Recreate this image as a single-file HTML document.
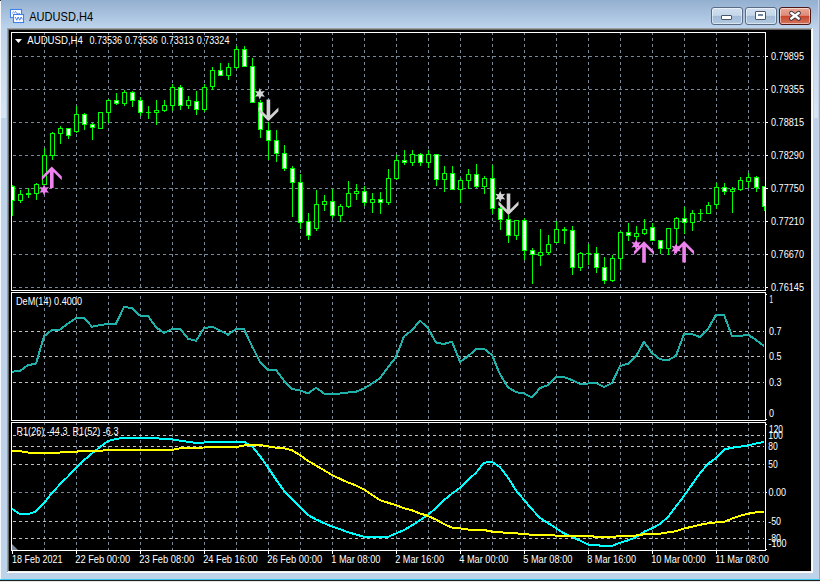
<!DOCTYPE html>
<html><head><meta charset="utf-8"><style>
html,body{margin:0;padding:0;}
body{width:820px;height:582px;overflow:hidden;position:relative;background:#bcd3ea;font-family:"Liberation Sans",sans-serif;}
.abs{position:absolute;}
#title{left:0;top:0;width:820px;height:28px;background:linear-gradient(#94b0d0,#a6bfdc 45%,#bcd4ec);}
.btn{top:7px;height:16px;width:30px;border:1px solid #5b6b82;border-radius:3px;box-sizing:content-box;
 background:linear-gradient(#d2e0f0 0%,#c4d6ea 46%,#a3bbd7 52%,#b2c9e2 100%);box-shadow:inset 0 0 0 1px rgba(255,255,255,.5);}
#bmin{left:711px;} #bmax{left:745px;}
#bcls{left:779px;border-color:#4b1717;background:linear-gradient(#eaa899 0%,#df8b78 46%,#c8462c 52%,#d3755e 100%);}
</style></head><body>
<div class="abs" id="title"></div>
<div class="abs" style="left:0;top:0;width:1px;height:582px;background:#f4f7fb"></div>
<div class="abs" style="left:0;top:0;width:1px;height:1px;background:#303030"></div>
<div class="abs" style="left:818px;top:0;width:1px;height:579px;background:#c6d0e8"></div>
<div class="abs" style="left:814px;top:28px;width:4px;height:90px;background:linear-gradient(#bcd3ea,#d8e5f3)"></div>
<div class="abs" style="left:1px;top:28px;width:5px;height:90px;background:linear-gradient(#bcd3ea,#d8e5f3)"></div>
<div class="abs" style="left:819px;top:0;width:1px;height:582px;background:#38c8f0"></div>
<div class="abs" style="left:0;top:579px;width:820px;height:1px;background:#38c8f0"></div>
<div class="abs" style="left:0;top:580px;width:820px;height:1px;background:#202020"></div>
<div class="abs" style="left:0;top:581px;width:820px;height:1px;background:#e8e8e8"></div>
<div class="abs btn" id="bmin"><div class="abs" style="left:9px;top:7px;width:9px;height:3px;border:1px solid #4a5568;background:#fff;border-radius:1px"></div></div>
<div class="abs btn" id="bmax"><div class="abs" style="left:9px;top:3px;width:9px;height:7px;border:1px solid #4a5568;background:#fff;border-radius:1px"><div class="abs" style="left:2px;top:2px;width:5px;height:2px;background:#6f86a8"></div></div></div>
<div class="abs btn" id="bcls"><svg class="abs" style="left:0;top:0" width="30" height="16" viewBox="0 0 30 16"><path d="M11.3 5 L18.7 10.6 M18.7 5 L11.3 10.6" stroke="#3a3344" stroke-width="4.3" stroke-linecap="round"/><path d="M11.3 5 L18.7 10.6 M18.7 5 L11.3 10.6" stroke="#ffffff" stroke-width="2.5" stroke-linecap="round"/></svg></div>
<svg class="abs" style="left:0;top:0" width="120" height="28" viewBox="0 0 120 28">
<rect x="10.5" y="9.5" width="11" height="8" fill="#fff" stroke="#3f80f6" stroke-width="1.1"/>
<rect x="10.5" y="9.5" width="11" height="8" fill="none" stroke="#3aa070" stroke-width="0.6" stroke-dasharray="0.5 2.5"/>
<path d="M12.3 13.2 q1.2 -2.2 2.4 -0.3 M15 11.5 q1.4 0.6 2 2.2 q1.2 0.6 3 0" stroke="#3b7be8" fill="none" stroke-width="1"/>
<rect x="13.5" y="14.5" width="10" height="8" fill="#fff" stroke="#3f80f6" stroke-width="1.1"/>
<rect x="13.5" y="14.5" width="10" height="8" fill="none" stroke="#3aa070" stroke-width="0.6" stroke-dasharray="0.5 2.5"/>
<path d="M15.2 17 l1.6 3.2 l1.4 -3.2 l1.5 3.2 l1.4 -3.2 l1.2 2.4" stroke="#3b7be8" fill="none" stroke-width="0.9"/>
<text x="29.2" y="21" font-family="Liberation Sans" font-size="12.2" fill="#000" textLength="64" lengthAdjust="spacingAndGlyphs">AUDUSD,H4</text>
</svg>
<svg class="abs" style="left:0;top:0" width="820" height="582" viewBox="0 0 820 582" shape-rendering="auto">
<rect x="7" y="28" width="806" height="545" fill="#000"/>
<path d="M7 28h806v1h-806z M7 28h1v545h-1z" fill="#a0a0a0" shape-rendering="crispEdges"/>
<path d="M8 29h804v1h-804z M8 29h1v543h-1z" fill="#696969" shape-rendering="crispEdges"/>
<path d="M812 28h1v545h-1z M7 572h806v1h-806z" fill="#ffffff" shape-rendering="crispEdges"/>
<path d="M811 29h1v543h-1z M8 571h804v1h-804z" fill="#f0f0f0" shape-rendering="crispEdges"/>
<path d="M44 33h1v2h-1zM44 38h1v3h-1zM44 44h1v3h-1zM44 50h1v3h-1zM44 56h1v3h-1zM44 62h1v3h-1zM44 68h1v3h-1zM44 74h1v3h-1zM44 80h1v3h-1zM44 86h1v3h-1zM44 92h1v3h-1zM44 98h1v3h-1zM44 104h1v3h-1zM44 110h1v3h-1zM44 116h1v3h-1zM44 122h1v3h-1zM44 128h1v3h-1zM44 134h1v3h-1zM44 140h1v3h-1zM44 146h1v3h-1zM44 152h1v3h-1zM44 158h1v3h-1zM44 164h1v3h-1zM44 170h1v3h-1zM44 176h1v3h-1zM44 182h1v3h-1zM44 188h1v3h-1zM44 194h1v3h-1zM44 200h1v3h-1zM44 206h1v3h-1zM44 212h1v3h-1zM44 218h1v3h-1zM44 224h1v3h-1zM44 230h1v3h-1zM44 236h1v3h-1zM44 242h1v3h-1zM44 248h1v3h-1zM44 254h1v3h-1zM44 260h1v3h-1zM44 266h1v3h-1zM44 272h1v3h-1zM44 278h1v3h-1zM44 284h1v3h-1zM76 33h1v2h-1zM76 38h1v3h-1zM76 44h1v3h-1zM76 50h1v3h-1zM76 56h1v3h-1zM76 62h1v3h-1zM76 68h1v3h-1zM76 74h1v3h-1zM76 80h1v3h-1zM76 86h1v3h-1zM76 92h1v3h-1zM76 98h1v3h-1zM76 104h1v3h-1zM76 110h1v3h-1zM76 116h1v3h-1zM76 122h1v3h-1zM76 128h1v3h-1zM76 134h1v3h-1zM76 140h1v3h-1zM76 146h1v3h-1zM76 152h1v3h-1zM76 158h1v3h-1zM76 164h1v3h-1zM76 170h1v3h-1zM76 176h1v3h-1zM76 182h1v3h-1zM76 188h1v3h-1zM76 194h1v3h-1zM76 200h1v3h-1zM76 206h1v3h-1zM76 212h1v3h-1zM76 218h1v3h-1zM76 224h1v3h-1zM76 230h1v3h-1zM76 236h1v3h-1zM76 242h1v3h-1zM76 248h1v3h-1zM76 254h1v3h-1zM76 260h1v3h-1zM76 266h1v3h-1zM76 272h1v3h-1zM76 278h1v3h-1zM76 284h1v3h-1zM108 33h1v2h-1zM108 38h1v3h-1zM108 44h1v3h-1zM108 50h1v3h-1zM108 56h1v3h-1zM108 62h1v3h-1zM108 68h1v3h-1zM108 74h1v3h-1zM108 80h1v3h-1zM108 86h1v3h-1zM108 92h1v3h-1zM108 98h1v3h-1zM108 104h1v3h-1zM108 110h1v3h-1zM108 116h1v3h-1zM108 122h1v3h-1zM108 128h1v3h-1zM108 134h1v3h-1zM108 140h1v3h-1zM108 146h1v3h-1zM108 152h1v3h-1zM108 158h1v3h-1zM108 164h1v3h-1zM108 170h1v3h-1zM108 176h1v3h-1zM108 182h1v3h-1zM108 188h1v3h-1zM108 194h1v3h-1zM108 200h1v3h-1zM108 206h1v3h-1zM108 212h1v3h-1zM108 218h1v3h-1zM108 224h1v3h-1zM108 230h1v3h-1zM108 236h1v3h-1zM108 242h1v3h-1zM108 248h1v3h-1zM108 254h1v3h-1zM108 260h1v3h-1zM108 266h1v3h-1zM108 272h1v3h-1zM108 278h1v3h-1zM108 284h1v3h-1zM140 33h1v2h-1zM140 38h1v3h-1zM140 44h1v3h-1zM140 50h1v3h-1zM140 56h1v3h-1zM140 62h1v3h-1zM140 68h1v3h-1zM140 74h1v3h-1zM140 80h1v3h-1zM140 86h1v3h-1zM140 92h1v3h-1zM140 98h1v3h-1zM140 104h1v3h-1zM140 110h1v3h-1zM140 116h1v3h-1zM140 122h1v3h-1zM140 128h1v3h-1zM140 134h1v3h-1zM140 140h1v3h-1zM140 146h1v3h-1zM140 152h1v3h-1zM140 158h1v3h-1zM140 164h1v3h-1zM140 170h1v3h-1zM140 176h1v3h-1zM140 182h1v3h-1zM140 188h1v3h-1zM140 194h1v3h-1zM140 200h1v3h-1zM140 206h1v3h-1zM140 212h1v3h-1zM140 218h1v3h-1zM140 224h1v3h-1zM140 230h1v3h-1zM140 236h1v3h-1zM140 242h1v3h-1zM140 248h1v3h-1zM140 254h1v3h-1zM140 260h1v3h-1zM140 266h1v3h-1zM140 272h1v3h-1zM140 278h1v3h-1zM140 284h1v3h-1zM172 33h1v2h-1zM172 38h1v3h-1zM172 44h1v3h-1zM172 50h1v3h-1zM172 56h1v3h-1zM172 62h1v3h-1zM172 68h1v3h-1zM172 74h1v3h-1zM172 80h1v3h-1zM172 86h1v3h-1zM172 92h1v3h-1zM172 98h1v3h-1zM172 104h1v3h-1zM172 110h1v3h-1zM172 116h1v3h-1zM172 122h1v3h-1zM172 128h1v3h-1zM172 134h1v3h-1zM172 140h1v3h-1zM172 146h1v3h-1zM172 152h1v3h-1zM172 158h1v3h-1zM172 164h1v3h-1zM172 170h1v3h-1zM172 176h1v3h-1zM172 182h1v3h-1zM172 188h1v3h-1zM172 194h1v3h-1zM172 200h1v3h-1zM172 206h1v3h-1zM172 212h1v3h-1zM172 218h1v3h-1zM172 224h1v3h-1zM172 230h1v3h-1zM172 236h1v3h-1zM172 242h1v3h-1zM172 248h1v3h-1zM172 254h1v3h-1zM172 260h1v3h-1zM172 266h1v3h-1zM172 272h1v3h-1zM172 278h1v3h-1zM172 284h1v3h-1zM204 33h1v2h-1zM204 38h1v3h-1zM204 44h1v3h-1zM204 50h1v3h-1zM204 56h1v3h-1zM204 62h1v3h-1zM204 68h1v3h-1zM204 74h1v3h-1zM204 80h1v3h-1zM204 86h1v3h-1zM204 92h1v3h-1zM204 98h1v3h-1zM204 104h1v3h-1zM204 110h1v3h-1zM204 116h1v3h-1zM204 122h1v3h-1zM204 128h1v3h-1zM204 134h1v3h-1zM204 140h1v3h-1zM204 146h1v3h-1zM204 152h1v3h-1zM204 158h1v3h-1zM204 164h1v3h-1zM204 170h1v3h-1zM204 176h1v3h-1zM204 182h1v3h-1zM204 188h1v3h-1zM204 194h1v3h-1zM204 200h1v3h-1zM204 206h1v3h-1zM204 212h1v3h-1zM204 218h1v3h-1zM204 224h1v3h-1zM204 230h1v3h-1zM204 236h1v3h-1zM204 242h1v3h-1zM204 248h1v3h-1zM204 254h1v3h-1zM204 260h1v3h-1zM204 266h1v3h-1zM204 272h1v3h-1zM204 278h1v3h-1zM204 284h1v3h-1zM236 33h1v2h-1zM236 38h1v3h-1zM236 44h1v3h-1zM236 50h1v3h-1zM236 56h1v3h-1zM236 62h1v3h-1zM236 68h1v3h-1zM236 74h1v3h-1zM236 80h1v3h-1zM236 86h1v3h-1zM236 92h1v3h-1zM236 98h1v3h-1zM236 104h1v3h-1zM236 110h1v3h-1zM236 116h1v3h-1zM236 122h1v3h-1zM236 128h1v3h-1zM236 134h1v3h-1zM236 140h1v3h-1zM236 146h1v3h-1zM236 152h1v3h-1zM236 158h1v3h-1zM236 164h1v3h-1zM236 170h1v3h-1zM236 176h1v3h-1zM236 182h1v3h-1zM236 188h1v3h-1zM236 194h1v3h-1zM236 200h1v3h-1zM236 206h1v3h-1zM236 212h1v3h-1zM236 218h1v3h-1zM236 224h1v3h-1zM236 230h1v3h-1zM236 236h1v3h-1zM236 242h1v3h-1zM236 248h1v3h-1zM236 254h1v3h-1zM236 260h1v3h-1zM236 266h1v3h-1zM236 272h1v3h-1zM236 278h1v3h-1zM236 284h1v3h-1zM268 33h1v2h-1zM268 38h1v3h-1zM268 44h1v3h-1zM268 50h1v3h-1zM268 56h1v3h-1zM268 62h1v3h-1zM268 68h1v3h-1zM268 74h1v3h-1zM268 80h1v3h-1zM268 86h1v3h-1zM268 92h1v3h-1zM268 98h1v3h-1zM268 104h1v3h-1zM268 110h1v3h-1zM268 116h1v3h-1zM268 122h1v3h-1zM268 128h1v3h-1zM268 134h1v3h-1zM268 140h1v3h-1zM268 146h1v3h-1zM268 152h1v3h-1zM268 158h1v3h-1zM268 164h1v3h-1zM268 170h1v3h-1zM268 176h1v3h-1zM268 182h1v3h-1zM268 188h1v3h-1zM268 194h1v3h-1zM268 200h1v3h-1zM268 206h1v3h-1zM268 212h1v3h-1zM268 218h1v3h-1zM268 224h1v3h-1zM268 230h1v3h-1zM268 236h1v3h-1zM268 242h1v3h-1zM268 248h1v3h-1zM268 254h1v3h-1zM268 260h1v3h-1zM268 266h1v3h-1zM268 272h1v3h-1zM268 278h1v3h-1zM268 284h1v3h-1zM300 33h1v2h-1zM300 38h1v3h-1zM300 44h1v3h-1zM300 50h1v3h-1zM300 56h1v3h-1zM300 62h1v3h-1zM300 68h1v3h-1zM300 74h1v3h-1zM300 80h1v3h-1zM300 86h1v3h-1zM300 92h1v3h-1zM300 98h1v3h-1zM300 104h1v3h-1zM300 110h1v3h-1zM300 116h1v3h-1zM300 122h1v3h-1zM300 128h1v3h-1zM300 134h1v3h-1zM300 140h1v3h-1zM300 146h1v3h-1zM300 152h1v3h-1zM300 158h1v3h-1zM300 164h1v3h-1zM300 170h1v3h-1zM300 176h1v3h-1zM300 182h1v3h-1zM300 188h1v3h-1zM300 194h1v3h-1zM300 200h1v3h-1zM300 206h1v3h-1zM300 212h1v3h-1zM300 218h1v3h-1zM300 224h1v3h-1zM300 230h1v3h-1zM300 236h1v3h-1zM300 242h1v3h-1zM300 248h1v3h-1zM300 254h1v3h-1zM300 260h1v3h-1zM300 266h1v3h-1zM300 272h1v3h-1zM300 278h1v3h-1zM300 284h1v3h-1zM332 33h1v2h-1zM332 38h1v3h-1zM332 44h1v3h-1zM332 50h1v3h-1zM332 56h1v3h-1zM332 62h1v3h-1zM332 68h1v3h-1zM332 74h1v3h-1zM332 80h1v3h-1zM332 86h1v3h-1zM332 92h1v3h-1zM332 98h1v3h-1zM332 104h1v3h-1zM332 110h1v3h-1zM332 116h1v3h-1zM332 122h1v3h-1zM332 128h1v3h-1zM332 134h1v3h-1zM332 140h1v3h-1zM332 146h1v3h-1zM332 152h1v3h-1zM332 158h1v3h-1zM332 164h1v3h-1zM332 170h1v3h-1zM332 176h1v3h-1zM332 182h1v3h-1zM332 188h1v3h-1zM332 194h1v3h-1zM332 200h1v3h-1zM332 206h1v3h-1zM332 212h1v3h-1zM332 218h1v3h-1zM332 224h1v3h-1zM332 230h1v3h-1zM332 236h1v3h-1zM332 242h1v3h-1zM332 248h1v3h-1zM332 254h1v3h-1zM332 260h1v3h-1zM332 266h1v3h-1zM332 272h1v3h-1zM332 278h1v3h-1zM332 284h1v3h-1zM364 33h1v2h-1zM364 38h1v3h-1zM364 44h1v3h-1zM364 50h1v3h-1zM364 56h1v3h-1zM364 62h1v3h-1zM364 68h1v3h-1zM364 74h1v3h-1zM364 80h1v3h-1zM364 86h1v3h-1zM364 92h1v3h-1zM364 98h1v3h-1zM364 104h1v3h-1zM364 110h1v3h-1zM364 116h1v3h-1zM364 122h1v3h-1zM364 128h1v3h-1zM364 134h1v3h-1zM364 140h1v3h-1zM364 146h1v3h-1zM364 152h1v3h-1zM364 158h1v3h-1zM364 164h1v3h-1zM364 170h1v3h-1zM364 176h1v3h-1zM364 182h1v3h-1zM364 188h1v3h-1zM364 194h1v3h-1zM364 200h1v3h-1zM364 206h1v3h-1zM364 212h1v3h-1zM364 218h1v3h-1zM364 224h1v3h-1zM364 230h1v3h-1zM364 236h1v3h-1zM364 242h1v3h-1zM364 248h1v3h-1zM364 254h1v3h-1zM364 260h1v3h-1zM364 266h1v3h-1zM364 272h1v3h-1zM364 278h1v3h-1zM364 284h1v3h-1zM396 33h1v2h-1zM396 38h1v3h-1zM396 44h1v3h-1zM396 50h1v3h-1zM396 56h1v3h-1zM396 62h1v3h-1zM396 68h1v3h-1zM396 74h1v3h-1zM396 80h1v3h-1zM396 86h1v3h-1zM396 92h1v3h-1zM396 98h1v3h-1zM396 104h1v3h-1zM396 110h1v3h-1zM396 116h1v3h-1zM396 122h1v3h-1zM396 128h1v3h-1zM396 134h1v3h-1zM396 140h1v3h-1zM396 146h1v3h-1zM396 152h1v3h-1zM396 158h1v3h-1zM396 164h1v3h-1zM396 170h1v3h-1zM396 176h1v3h-1zM396 182h1v3h-1zM396 188h1v3h-1zM396 194h1v3h-1zM396 200h1v3h-1zM396 206h1v3h-1zM396 212h1v3h-1zM396 218h1v3h-1zM396 224h1v3h-1zM396 230h1v3h-1zM396 236h1v3h-1zM396 242h1v3h-1zM396 248h1v3h-1zM396 254h1v3h-1zM396 260h1v3h-1zM396 266h1v3h-1zM396 272h1v3h-1zM396 278h1v3h-1zM396 284h1v3h-1zM428 33h1v2h-1zM428 38h1v3h-1zM428 44h1v3h-1zM428 50h1v3h-1zM428 56h1v3h-1zM428 62h1v3h-1zM428 68h1v3h-1zM428 74h1v3h-1zM428 80h1v3h-1zM428 86h1v3h-1zM428 92h1v3h-1zM428 98h1v3h-1zM428 104h1v3h-1zM428 110h1v3h-1zM428 116h1v3h-1zM428 122h1v3h-1zM428 128h1v3h-1zM428 134h1v3h-1zM428 140h1v3h-1zM428 146h1v3h-1zM428 152h1v3h-1zM428 158h1v3h-1zM428 164h1v3h-1zM428 170h1v3h-1zM428 176h1v3h-1zM428 182h1v3h-1zM428 188h1v3h-1zM428 194h1v3h-1zM428 200h1v3h-1zM428 206h1v3h-1zM428 212h1v3h-1zM428 218h1v3h-1zM428 224h1v3h-1zM428 230h1v3h-1zM428 236h1v3h-1zM428 242h1v3h-1zM428 248h1v3h-1zM428 254h1v3h-1zM428 260h1v3h-1zM428 266h1v3h-1zM428 272h1v3h-1zM428 278h1v3h-1zM428 284h1v3h-1zM460 33h1v2h-1zM460 38h1v3h-1zM460 44h1v3h-1zM460 50h1v3h-1zM460 56h1v3h-1zM460 62h1v3h-1zM460 68h1v3h-1zM460 74h1v3h-1zM460 80h1v3h-1zM460 86h1v3h-1zM460 92h1v3h-1zM460 98h1v3h-1zM460 104h1v3h-1zM460 110h1v3h-1zM460 116h1v3h-1zM460 122h1v3h-1zM460 128h1v3h-1zM460 134h1v3h-1zM460 140h1v3h-1zM460 146h1v3h-1zM460 152h1v3h-1zM460 158h1v3h-1zM460 164h1v3h-1zM460 170h1v3h-1zM460 176h1v3h-1zM460 182h1v3h-1zM460 188h1v3h-1zM460 194h1v3h-1zM460 200h1v3h-1zM460 206h1v3h-1zM460 212h1v3h-1zM460 218h1v3h-1zM460 224h1v3h-1zM460 230h1v3h-1zM460 236h1v3h-1zM460 242h1v3h-1zM460 248h1v3h-1zM460 254h1v3h-1zM460 260h1v3h-1zM460 266h1v3h-1zM460 272h1v3h-1zM460 278h1v3h-1zM460 284h1v3h-1zM492 33h1v2h-1zM492 38h1v3h-1zM492 44h1v3h-1zM492 50h1v3h-1zM492 56h1v3h-1zM492 62h1v3h-1zM492 68h1v3h-1zM492 74h1v3h-1zM492 80h1v3h-1zM492 86h1v3h-1zM492 92h1v3h-1zM492 98h1v3h-1zM492 104h1v3h-1zM492 110h1v3h-1zM492 116h1v3h-1zM492 122h1v3h-1zM492 128h1v3h-1zM492 134h1v3h-1zM492 140h1v3h-1zM492 146h1v3h-1zM492 152h1v3h-1zM492 158h1v3h-1zM492 164h1v3h-1zM492 170h1v3h-1zM492 176h1v3h-1zM492 182h1v3h-1zM492 188h1v3h-1zM492 194h1v3h-1zM492 200h1v3h-1zM492 206h1v3h-1zM492 212h1v3h-1zM492 218h1v3h-1zM492 224h1v3h-1zM492 230h1v3h-1zM492 236h1v3h-1zM492 242h1v3h-1zM492 248h1v3h-1zM492 254h1v3h-1zM492 260h1v3h-1zM492 266h1v3h-1zM492 272h1v3h-1zM492 278h1v3h-1zM492 284h1v3h-1zM524 33h1v2h-1zM524 38h1v3h-1zM524 44h1v3h-1zM524 50h1v3h-1zM524 56h1v3h-1zM524 62h1v3h-1zM524 68h1v3h-1zM524 74h1v3h-1zM524 80h1v3h-1zM524 86h1v3h-1zM524 92h1v3h-1zM524 98h1v3h-1zM524 104h1v3h-1zM524 110h1v3h-1zM524 116h1v3h-1zM524 122h1v3h-1zM524 128h1v3h-1zM524 134h1v3h-1zM524 140h1v3h-1zM524 146h1v3h-1zM524 152h1v3h-1zM524 158h1v3h-1zM524 164h1v3h-1zM524 170h1v3h-1zM524 176h1v3h-1zM524 182h1v3h-1zM524 188h1v3h-1zM524 194h1v3h-1zM524 200h1v3h-1zM524 206h1v3h-1zM524 212h1v3h-1zM524 218h1v3h-1zM524 224h1v3h-1zM524 230h1v3h-1zM524 236h1v3h-1zM524 242h1v3h-1zM524 248h1v3h-1zM524 254h1v3h-1zM524 260h1v3h-1zM524 266h1v3h-1zM524 272h1v3h-1zM524 278h1v3h-1zM524 284h1v3h-1zM556 33h1v2h-1zM556 38h1v3h-1zM556 44h1v3h-1zM556 50h1v3h-1zM556 56h1v3h-1zM556 62h1v3h-1zM556 68h1v3h-1zM556 74h1v3h-1zM556 80h1v3h-1zM556 86h1v3h-1zM556 92h1v3h-1zM556 98h1v3h-1zM556 104h1v3h-1zM556 110h1v3h-1zM556 116h1v3h-1zM556 122h1v3h-1zM556 128h1v3h-1zM556 134h1v3h-1zM556 140h1v3h-1zM556 146h1v3h-1zM556 152h1v3h-1zM556 158h1v3h-1zM556 164h1v3h-1zM556 170h1v3h-1zM556 176h1v3h-1zM556 182h1v3h-1zM556 188h1v3h-1zM556 194h1v3h-1zM556 200h1v3h-1zM556 206h1v3h-1zM556 212h1v3h-1zM556 218h1v3h-1zM556 224h1v3h-1zM556 230h1v3h-1zM556 236h1v3h-1zM556 242h1v3h-1zM556 248h1v3h-1zM556 254h1v3h-1zM556 260h1v3h-1zM556 266h1v3h-1zM556 272h1v3h-1zM556 278h1v3h-1zM556 284h1v3h-1zM588 33h1v2h-1zM588 38h1v3h-1zM588 44h1v3h-1zM588 50h1v3h-1zM588 56h1v3h-1zM588 62h1v3h-1zM588 68h1v3h-1zM588 74h1v3h-1zM588 80h1v3h-1zM588 86h1v3h-1zM588 92h1v3h-1zM588 98h1v3h-1zM588 104h1v3h-1zM588 110h1v3h-1zM588 116h1v3h-1zM588 122h1v3h-1zM588 128h1v3h-1zM588 134h1v3h-1zM588 140h1v3h-1zM588 146h1v3h-1zM588 152h1v3h-1zM588 158h1v3h-1zM588 164h1v3h-1zM588 170h1v3h-1zM588 176h1v3h-1zM588 182h1v3h-1zM588 188h1v3h-1zM588 194h1v3h-1zM588 200h1v3h-1zM588 206h1v3h-1zM588 212h1v3h-1zM588 218h1v3h-1zM588 224h1v3h-1zM588 230h1v3h-1zM588 236h1v3h-1zM588 242h1v3h-1zM588 248h1v3h-1zM588 254h1v3h-1zM588 260h1v3h-1zM588 266h1v3h-1zM588 272h1v3h-1zM588 278h1v3h-1zM588 284h1v3h-1zM620 33h1v2h-1zM620 38h1v3h-1zM620 44h1v3h-1zM620 50h1v3h-1zM620 56h1v3h-1zM620 62h1v3h-1zM620 68h1v3h-1zM620 74h1v3h-1zM620 80h1v3h-1zM620 86h1v3h-1zM620 92h1v3h-1zM620 98h1v3h-1zM620 104h1v3h-1zM620 110h1v3h-1zM620 116h1v3h-1zM620 122h1v3h-1zM620 128h1v3h-1zM620 134h1v3h-1zM620 140h1v3h-1zM620 146h1v3h-1zM620 152h1v3h-1zM620 158h1v3h-1zM620 164h1v3h-1zM620 170h1v3h-1zM620 176h1v3h-1zM620 182h1v3h-1zM620 188h1v3h-1zM620 194h1v3h-1zM620 200h1v3h-1zM620 206h1v3h-1zM620 212h1v3h-1zM620 218h1v3h-1zM620 224h1v3h-1zM620 230h1v3h-1zM620 236h1v3h-1zM620 242h1v3h-1zM620 248h1v3h-1zM620 254h1v3h-1zM620 260h1v3h-1zM620 266h1v3h-1zM620 272h1v3h-1zM620 278h1v3h-1zM620 284h1v3h-1zM652 33h1v2h-1zM652 38h1v3h-1zM652 44h1v3h-1zM652 50h1v3h-1zM652 56h1v3h-1zM652 62h1v3h-1zM652 68h1v3h-1zM652 74h1v3h-1zM652 80h1v3h-1zM652 86h1v3h-1zM652 92h1v3h-1zM652 98h1v3h-1zM652 104h1v3h-1zM652 110h1v3h-1zM652 116h1v3h-1zM652 122h1v3h-1zM652 128h1v3h-1zM652 134h1v3h-1zM652 140h1v3h-1zM652 146h1v3h-1zM652 152h1v3h-1zM652 158h1v3h-1zM652 164h1v3h-1zM652 170h1v3h-1zM652 176h1v3h-1zM652 182h1v3h-1zM652 188h1v3h-1zM652 194h1v3h-1zM652 200h1v3h-1zM652 206h1v3h-1zM652 212h1v3h-1zM652 218h1v3h-1zM652 224h1v3h-1zM652 230h1v3h-1zM652 236h1v3h-1zM652 242h1v3h-1zM652 248h1v3h-1zM652 254h1v3h-1zM652 260h1v3h-1zM652 266h1v3h-1zM652 272h1v3h-1zM652 278h1v3h-1zM652 284h1v3h-1zM684 33h1v2h-1zM684 38h1v3h-1zM684 44h1v3h-1zM684 50h1v3h-1zM684 56h1v3h-1zM684 62h1v3h-1zM684 68h1v3h-1zM684 74h1v3h-1zM684 80h1v3h-1zM684 86h1v3h-1zM684 92h1v3h-1zM684 98h1v3h-1zM684 104h1v3h-1zM684 110h1v3h-1zM684 116h1v3h-1zM684 122h1v3h-1zM684 128h1v3h-1zM684 134h1v3h-1zM684 140h1v3h-1zM684 146h1v3h-1zM684 152h1v3h-1zM684 158h1v3h-1zM684 164h1v3h-1zM684 170h1v3h-1zM684 176h1v3h-1zM684 182h1v3h-1zM684 188h1v3h-1zM684 194h1v3h-1zM684 200h1v3h-1zM684 206h1v3h-1zM684 212h1v3h-1zM684 218h1v3h-1zM684 224h1v3h-1zM684 230h1v3h-1zM684 236h1v3h-1zM684 242h1v3h-1zM684 248h1v3h-1zM684 254h1v3h-1zM684 260h1v3h-1zM684 266h1v3h-1zM684 272h1v3h-1zM684 278h1v3h-1zM684 284h1v3h-1zM716 33h1v2h-1zM716 38h1v3h-1zM716 44h1v3h-1zM716 50h1v3h-1zM716 56h1v3h-1zM716 62h1v3h-1zM716 68h1v3h-1zM716 74h1v3h-1zM716 80h1v3h-1zM716 86h1v3h-1zM716 92h1v3h-1zM716 98h1v3h-1zM716 104h1v3h-1zM716 110h1v3h-1zM716 116h1v3h-1zM716 122h1v3h-1zM716 128h1v3h-1zM716 134h1v3h-1zM716 140h1v3h-1zM716 146h1v3h-1zM716 152h1v3h-1zM716 158h1v3h-1zM716 164h1v3h-1zM716 170h1v3h-1zM716 176h1v3h-1zM716 182h1v3h-1zM716 188h1v3h-1zM716 194h1v3h-1zM716 200h1v3h-1zM716 206h1v3h-1zM716 212h1v3h-1zM716 218h1v3h-1zM716 224h1v3h-1zM716 230h1v3h-1zM716 236h1v3h-1zM716 242h1v3h-1zM716 248h1v3h-1zM716 254h1v3h-1zM716 260h1v3h-1zM716 266h1v3h-1zM716 272h1v3h-1zM716 278h1v3h-1zM716 284h1v3h-1zM748 33h1v2h-1zM748 38h1v3h-1zM748 44h1v3h-1zM748 50h1v3h-1zM748 56h1v3h-1zM748 62h1v3h-1zM748 68h1v3h-1zM748 74h1v3h-1zM748 80h1v3h-1zM748 86h1v3h-1zM748 92h1v3h-1zM748 98h1v3h-1zM748 104h1v3h-1zM748 110h1v3h-1zM748 116h1v3h-1zM748 122h1v3h-1zM748 128h1v3h-1zM748 134h1v3h-1zM748 140h1v3h-1zM748 146h1v3h-1zM748 152h1v3h-1zM748 158h1v3h-1zM748 164h1v3h-1zM748 170h1v3h-1zM748 176h1v3h-1zM748 182h1v3h-1zM748 188h1v3h-1zM748 194h1v3h-1zM748 200h1v3h-1zM748 206h1v3h-1zM748 212h1v3h-1zM748 218h1v3h-1zM748 224h1v3h-1zM748 230h1v3h-1zM748 236h1v3h-1zM748 242h1v3h-1zM748 248h1v3h-1zM748 254h1v3h-1zM748 260h1v3h-1zM748 266h1v3h-1zM748 272h1v3h-1zM748 278h1v3h-1zM748 284h1v3h-1zM44 296h1v3h-1zM44 302h1v3h-1zM44 308h1v3h-1zM44 314h1v3h-1zM44 320h1v3h-1zM44 326h1v3h-1zM44 332h1v3h-1zM44 338h1v3h-1zM44 344h1v3h-1zM44 350h1v3h-1zM44 356h1v3h-1zM44 362h1v3h-1zM44 368h1v3h-1zM44 374h1v3h-1zM44 380h1v3h-1zM44 386h1v3h-1zM44 392h1v3h-1zM44 398h1v3h-1zM44 404h1v3h-1zM44 410h1v3h-1zM44 416h1v3h-1zM76 296h1v3h-1zM76 302h1v3h-1zM76 308h1v3h-1zM76 314h1v3h-1zM76 320h1v3h-1zM76 326h1v3h-1zM76 332h1v3h-1zM76 338h1v3h-1zM76 344h1v3h-1zM76 350h1v3h-1zM76 356h1v3h-1zM76 362h1v3h-1zM76 368h1v3h-1zM76 374h1v3h-1zM76 380h1v3h-1zM76 386h1v3h-1zM76 392h1v3h-1zM76 398h1v3h-1zM76 404h1v3h-1zM76 410h1v3h-1zM76 416h1v3h-1zM108 296h1v3h-1zM108 302h1v3h-1zM108 308h1v3h-1zM108 314h1v3h-1zM108 320h1v3h-1zM108 326h1v3h-1zM108 332h1v3h-1zM108 338h1v3h-1zM108 344h1v3h-1zM108 350h1v3h-1zM108 356h1v3h-1zM108 362h1v3h-1zM108 368h1v3h-1zM108 374h1v3h-1zM108 380h1v3h-1zM108 386h1v3h-1zM108 392h1v3h-1zM108 398h1v3h-1zM108 404h1v3h-1zM108 410h1v3h-1zM108 416h1v3h-1zM140 296h1v3h-1zM140 302h1v3h-1zM140 308h1v3h-1zM140 314h1v3h-1zM140 320h1v3h-1zM140 326h1v3h-1zM140 332h1v3h-1zM140 338h1v3h-1zM140 344h1v3h-1zM140 350h1v3h-1zM140 356h1v3h-1zM140 362h1v3h-1zM140 368h1v3h-1zM140 374h1v3h-1zM140 380h1v3h-1zM140 386h1v3h-1zM140 392h1v3h-1zM140 398h1v3h-1zM140 404h1v3h-1zM140 410h1v3h-1zM140 416h1v3h-1zM172 296h1v3h-1zM172 302h1v3h-1zM172 308h1v3h-1zM172 314h1v3h-1zM172 320h1v3h-1zM172 326h1v3h-1zM172 332h1v3h-1zM172 338h1v3h-1zM172 344h1v3h-1zM172 350h1v3h-1zM172 356h1v3h-1zM172 362h1v3h-1zM172 368h1v3h-1zM172 374h1v3h-1zM172 380h1v3h-1zM172 386h1v3h-1zM172 392h1v3h-1zM172 398h1v3h-1zM172 404h1v3h-1zM172 410h1v3h-1zM172 416h1v3h-1zM204 296h1v3h-1zM204 302h1v3h-1zM204 308h1v3h-1zM204 314h1v3h-1zM204 320h1v3h-1zM204 326h1v3h-1zM204 332h1v3h-1zM204 338h1v3h-1zM204 344h1v3h-1zM204 350h1v3h-1zM204 356h1v3h-1zM204 362h1v3h-1zM204 368h1v3h-1zM204 374h1v3h-1zM204 380h1v3h-1zM204 386h1v3h-1zM204 392h1v3h-1zM204 398h1v3h-1zM204 404h1v3h-1zM204 410h1v3h-1zM204 416h1v3h-1zM236 296h1v3h-1zM236 302h1v3h-1zM236 308h1v3h-1zM236 314h1v3h-1zM236 320h1v3h-1zM236 326h1v3h-1zM236 332h1v3h-1zM236 338h1v3h-1zM236 344h1v3h-1zM236 350h1v3h-1zM236 356h1v3h-1zM236 362h1v3h-1zM236 368h1v3h-1zM236 374h1v3h-1zM236 380h1v3h-1zM236 386h1v3h-1zM236 392h1v3h-1zM236 398h1v3h-1zM236 404h1v3h-1zM236 410h1v3h-1zM236 416h1v3h-1zM268 296h1v3h-1zM268 302h1v3h-1zM268 308h1v3h-1zM268 314h1v3h-1zM268 320h1v3h-1zM268 326h1v3h-1zM268 332h1v3h-1zM268 338h1v3h-1zM268 344h1v3h-1zM268 350h1v3h-1zM268 356h1v3h-1zM268 362h1v3h-1zM268 368h1v3h-1zM268 374h1v3h-1zM268 380h1v3h-1zM268 386h1v3h-1zM268 392h1v3h-1zM268 398h1v3h-1zM268 404h1v3h-1zM268 410h1v3h-1zM268 416h1v3h-1zM300 296h1v3h-1zM300 302h1v3h-1zM300 308h1v3h-1zM300 314h1v3h-1zM300 320h1v3h-1zM300 326h1v3h-1zM300 332h1v3h-1zM300 338h1v3h-1zM300 344h1v3h-1zM300 350h1v3h-1zM300 356h1v3h-1zM300 362h1v3h-1zM300 368h1v3h-1zM300 374h1v3h-1zM300 380h1v3h-1zM300 386h1v3h-1zM300 392h1v3h-1zM300 398h1v3h-1zM300 404h1v3h-1zM300 410h1v3h-1zM300 416h1v3h-1zM332 296h1v3h-1zM332 302h1v3h-1zM332 308h1v3h-1zM332 314h1v3h-1zM332 320h1v3h-1zM332 326h1v3h-1zM332 332h1v3h-1zM332 338h1v3h-1zM332 344h1v3h-1zM332 350h1v3h-1zM332 356h1v3h-1zM332 362h1v3h-1zM332 368h1v3h-1zM332 374h1v3h-1zM332 380h1v3h-1zM332 386h1v3h-1zM332 392h1v3h-1zM332 398h1v3h-1zM332 404h1v3h-1zM332 410h1v3h-1zM332 416h1v3h-1zM364 296h1v3h-1zM364 302h1v3h-1zM364 308h1v3h-1zM364 314h1v3h-1zM364 320h1v3h-1zM364 326h1v3h-1zM364 332h1v3h-1zM364 338h1v3h-1zM364 344h1v3h-1zM364 350h1v3h-1zM364 356h1v3h-1zM364 362h1v3h-1zM364 368h1v3h-1zM364 374h1v3h-1zM364 380h1v3h-1zM364 386h1v3h-1zM364 392h1v3h-1zM364 398h1v3h-1zM364 404h1v3h-1zM364 410h1v3h-1zM364 416h1v3h-1zM396 296h1v3h-1zM396 302h1v3h-1zM396 308h1v3h-1zM396 314h1v3h-1zM396 320h1v3h-1zM396 326h1v3h-1zM396 332h1v3h-1zM396 338h1v3h-1zM396 344h1v3h-1zM396 350h1v3h-1zM396 356h1v3h-1zM396 362h1v3h-1zM396 368h1v3h-1zM396 374h1v3h-1zM396 380h1v3h-1zM396 386h1v3h-1zM396 392h1v3h-1zM396 398h1v3h-1zM396 404h1v3h-1zM396 410h1v3h-1zM396 416h1v3h-1zM428 296h1v3h-1zM428 302h1v3h-1zM428 308h1v3h-1zM428 314h1v3h-1zM428 320h1v3h-1zM428 326h1v3h-1zM428 332h1v3h-1zM428 338h1v3h-1zM428 344h1v3h-1zM428 350h1v3h-1zM428 356h1v3h-1zM428 362h1v3h-1zM428 368h1v3h-1zM428 374h1v3h-1zM428 380h1v3h-1zM428 386h1v3h-1zM428 392h1v3h-1zM428 398h1v3h-1zM428 404h1v3h-1zM428 410h1v3h-1zM428 416h1v3h-1zM460 296h1v3h-1zM460 302h1v3h-1zM460 308h1v3h-1zM460 314h1v3h-1zM460 320h1v3h-1zM460 326h1v3h-1zM460 332h1v3h-1zM460 338h1v3h-1zM460 344h1v3h-1zM460 350h1v3h-1zM460 356h1v3h-1zM460 362h1v3h-1zM460 368h1v3h-1zM460 374h1v3h-1zM460 380h1v3h-1zM460 386h1v3h-1zM460 392h1v3h-1zM460 398h1v3h-1zM460 404h1v3h-1zM460 410h1v3h-1zM460 416h1v3h-1zM492 296h1v3h-1zM492 302h1v3h-1zM492 308h1v3h-1zM492 314h1v3h-1zM492 320h1v3h-1zM492 326h1v3h-1zM492 332h1v3h-1zM492 338h1v3h-1zM492 344h1v3h-1zM492 350h1v3h-1zM492 356h1v3h-1zM492 362h1v3h-1zM492 368h1v3h-1zM492 374h1v3h-1zM492 380h1v3h-1zM492 386h1v3h-1zM492 392h1v3h-1zM492 398h1v3h-1zM492 404h1v3h-1zM492 410h1v3h-1zM492 416h1v3h-1zM524 296h1v3h-1zM524 302h1v3h-1zM524 308h1v3h-1zM524 314h1v3h-1zM524 320h1v3h-1zM524 326h1v3h-1zM524 332h1v3h-1zM524 338h1v3h-1zM524 344h1v3h-1zM524 350h1v3h-1zM524 356h1v3h-1zM524 362h1v3h-1zM524 368h1v3h-1zM524 374h1v3h-1zM524 380h1v3h-1zM524 386h1v3h-1zM524 392h1v3h-1zM524 398h1v3h-1zM524 404h1v3h-1zM524 410h1v3h-1zM524 416h1v3h-1zM556 296h1v3h-1zM556 302h1v3h-1zM556 308h1v3h-1zM556 314h1v3h-1zM556 320h1v3h-1zM556 326h1v3h-1zM556 332h1v3h-1zM556 338h1v3h-1zM556 344h1v3h-1zM556 350h1v3h-1zM556 356h1v3h-1zM556 362h1v3h-1zM556 368h1v3h-1zM556 374h1v3h-1zM556 380h1v3h-1zM556 386h1v3h-1zM556 392h1v3h-1zM556 398h1v3h-1zM556 404h1v3h-1zM556 410h1v3h-1zM556 416h1v3h-1zM588 296h1v3h-1zM588 302h1v3h-1zM588 308h1v3h-1zM588 314h1v3h-1zM588 320h1v3h-1zM588 326h1v3h-1zM588 332h1v3h-1zM588 338h1v3h-1zM588 344h1v3h-1zM588 350h1v3h-1zM588 356h1v3h-1zM588 362h1v3h-1zM588 368h1v3h-1zM588 374h1v3h-1zM588 380h1v3h-1zM588 386h1v3h-1zM588 392h1v3h-1zM588 398h1v3h-1zM588 404h1v3h-1zM588 410h1v3h-1zM588 416h1v3h-1zM620 296h1v3h-1zM620 302h1v3h-1zM620 308h1v3h-1zM620 314h1v3h-1zM620 320h1v3h-1zM620 326h1v3h-1zM620 332h1v3h-1zM620 338h1v3h-1zM620 344h1v3h-1zM620 350h1v3h-1zM620 356h1v3h-1zM620 362h1v3h-1zM620 368h1v3h-1zM620 374h1v3h-1zM620 380h1v3h-1zM620 386h1v3h-1zM620 392h1v3h-1zM620 398h1v3h-1zM620 404h1v3h-1zM620 410h1v3h-1zM620 416h1v3h-1zM652 296h1v3h-1zM652 302h1v3h-1zM652 308h1v3h-1zM652 314h1v3h-1zM652 320h1v3h-1zM652 326h1v3h-1zM652 332h1v3h-1zM652 338h1v3h-1zM652 344h1v3h-1zM652 350h1v3h-1zM652 356h1v3h-1zM652 362h1v3h-1zM652 368h1v3h-1zM652 374h1v3h-1zM652 380h1v3h-1zM652 386h1v3h-1zM652 392h1v3h-1zM652 398h1v3h-1zM652 404h1v3h-1zM652 410h1v3h-1zM652 416h1v3h-1zM684 296h1v3h-1zM684 302h1v3h-1zM684 308h1v3h-1zM684 314h1v3h-1zM684 320h1v3h-1zM684 326h1v3h-1zM684 332h1v3h-1zM684 338h1v3h-1zM684 344h1v3h-1zM684 350h1v3h-1zM684 356h1v3h-1zM684 362h1v3h-1zM684 368h1v3h-1zM684 374h1v3h-1zM684 380h1v3h-1zM684 386h1v3h-1zM684 392h1v3h-1zM684 398h1v3h-1zM684 404h1v3h-1zM684 410h1v3h-1zM684 416h1v3h-1zM716 296h1v3h-1zM716 302h1v3h-1zM716 308h1v3h-1zM716 314h1v3h-1zM716 320h1v3h-1zM716 326h1v3h-1zM716 332h1v3h-1zM716 338h1v3h-1zM716 344h1v3h-1zM716 350h1v3h-1zM716 356h1v3h-1zM716 362h1v3h-1zM716 368h1v3h-1zM716 374h1v3h-1zM716 380h1v3h-1zM716 386h1v3h-1zM716 392h1v3h-1zM716 398h1v3h-1zM716 404h1v3h-1zM716 410h1v3h-1zM716 416h1v3h-1zM748 296h1v3h-1zM748 302h1v3h-1zM748 308h1v3h-1zM748 314h1v3h-1zM748 320h1v3h-1zM748 326h1v3h-1zM748 332h1v3h-1zM748 338h1v3h-1zM748 344h1v3h-1zM748 350h1v3h-1zM748 356h1v3h-1zM748 362h1v3h-1zM748 368h1v3h-1zM748 374h1v3h-1zM748 380h1v3h-1zM748 386h1v3h-1zM748 392h1v3h-1zM748 398h1v3h-1zM748 404h1v3h-1zM748 410h1v3h-1zM748 416h1v3h-1zM44 423h1v2h-1zM44 428h1v3h-1zM44 434h1v3h-1zM44 440h1v3h-1zM44 446h1v3h-1zM44 452h1v3h-1zM44 458h1v3h-1zM44 464h1v3h-1zM44 470h1v3h-1zM44 476h1v3h-1zM44 482h1v3h-1zM44 488h1v3h-1zM44 494h1v3h-1zM44 500h1v3h-1zM44 506h1v3h-1zM44 512h1v3h-1zM44 518h1v3h-1zM44 524h1v3h-1zM44 530h1v3h-1zM44 536h1v3h-1zM44 542h1v3h-1zM44 548h1v2h-1zM76 423h1v2h-1zM76 428h1v3h-1zM76 434h1v3h-1zM76 440h1v3h-1zM76 446h1v3h-1zM76 452h1v3h-1zM76 458h1v3h-1zM76 464h1v3h-1zM76 470h1v3h-1zM76 476h1v3h-1zM76 482h1v3h-1zM76 488h1v3h-1zM76 494h1v3h-1zM76 500h1v3h-1zM76 506h1v3h-1zM76 512h1v3h-1zM76 518h1v3h-1zM76 524h1v3h-1zM76 530h1v3h-1zM76 536h1v3h-1zM76 542h1v3h-1zM76 548h1v2h-1zM108 423h1v2h-1zM108 428h1v3h-1zM108 434h1v3h-1zM108 440h1v3h-1zM108 446h1v3h-1zM108 452h1v3h-1zM108 458h1v3h-1zM108 464h1v3h-1zM108 470h1v3h-1zM108 476h1v3h-1zM108 482h1v3h-1zM108 488h1v3h-1zM108 494h1v3h-1zM108 500h1v3h-1zM108 506h1v3h-1zM108 512h1v3h-1zM108 518h1v3h-1zM108 524h1v3h-1zM108 530h1v3h-1zM108 536h1v3h-1zM108 542h1v3h-1zM108 548h1v2h-1zM140 423h1v2h-1zM140 428h1v3h-1zM140 434h1v3h-1zM140 440h1v3h-1zM140 446h1v3h-1zM140 452h1v3h-1zM140 458h1v3h-1zM140 464h1v3h-1zM140 470h1v3h-1zM140 476h1v3h-1zM140 482h1v3h-1zM140 488h1v3h-1zM140 494h1v3h-1zM140 500h1v3h-1zM140 506h1v3h-1zM140 512h1v3h-1zM140 518h1v3h-1zM140 524h1v3h-1zM140 530h1v3h-1zM140 536h1v3h-1zM140 542h1v3h-1zM140 548h1v2h-1zM172 423h1v2h-1zM172 428h1v3h-1zM172 434h1v3h-1zM172 440h1v3h-1zM172 446h1v3h-1zM172 452h1v3h-1zM172 458h1v3h-1zM172 464h1v3h-1zM172 470h1v3h-1zM172 476h1v3h-1zM172 482h1v3h-1zM172 488h1v3h-1zM172 494h1v3h-1zM172 500h1v3h-1zM172 506h1v3h-1zM172 512h1v3h-1zM172 518h1v3h-1zM172 524h1v3h-1zM172 530h1v3h-1zM172 536h1v3h-1zM172 542h1v3h-1zM172 548h1v2h-1zM204 423h1v2h-1zM204 428h1v3h-1zM204 434h1v3h-1zM204 440h1v3h-1zM204 446h1v3h-1zM204 452h1v3h-1zM204 458h1v3h-1zM204 464h1v3h-1zM204 470h1v3h-1zM204 476h1v3h-1zM204 482h1v3h-1zM204 488h1v3h-1zM204 494h1v3h-1zM204 500h1v3h-1zM204 506h1v3h-1zM204 512h1v3h-1zM204 518h1v3h-1zM204 524h1v3h-1zM204 530h1v3h-1zM204 536h1v3h-1zM204 542h1v3h-1zM204 548h1v2h-1zM236 423h1v2h-1zM236 428h1v3h-1zM236 434h1v3h-1zM236 440h1v3h-1zM236 446h1v3h-1zM236 452h1v3h-1zM236 458h1v3h-1zM236 464h1v3h-1zM236 470h1v3h-1zM236 476h1v3h-1zM236 482h1v3h-1zM236 488h1v3h-1zM236 494h1v3h-1zM236 500h1v3h-1zM236 506h1v3h-1zM236 512h1v3h-1zM236 518h1v3h-1zM236 524h1v3h-1zM236 530h1v3h-1zM236 536h1v3h-1zM236 542h1v3h-1zM236 548h1v2h-1zM268 423h1v2h-1zM268 428h1v3h-1zM268 434h1v3h-1zM268 440h1v3h-1zM268 446h1v3h-1zM268 452h1v3h-1zM268 458h1v3h-1zM268 464h1v3h-1zM268 470h1v3h-1zM268 476h1v3h-1zM268 482h1v3h-1zM268 488h1v3h-1zM268 494h1v3h-1zM268 500h1v3h-1zM268 506h1v3h-1zM268 512h1v3h-1zM268 518h1v3h-1zM268 524h1v3h-1zM268 530h1v3h-1zM268 536h1v3h-1zM268 542h1v3h-1zM268 548h1v2h-1zM300 423h1v2h-1zM300 428h1v3h-1zM300 434h1v3h-1zM300 440h1v3h-1zM300 446h1v3h-1zM300 452h1v3h-1zM300 458h1v3h-1zM300 464h1v3h-1zM300 470h1v3h-1zM300 476h1v3h-1zM300 482h1v3h-1zM300 488h1v3h-1zM300 494h1v3h-1zM300 500h1v3h-1zM300 506h1v3h-1zM300 512h1v3h-1zM300 518h1v3h-1zM300 524h1v3h-1zM300 530h1v3h-1zM300 536h1v3h-1zM300 542h1v3h-1zM300 548h1v2h-1zM332 423h1v2h-1zM332 428h1v3h-1zM332 434h1v3h-1zM332 440h1v3h-1zM332 446h1v3h-1zM332 452h1v3h-1zM332 458h1v3h-1zM332 464h1v3h-1zM332 470h1v3h-1zM332 476h1v3h-1zM332 482h1v3h-1zM332 488h1v3h-1zM332 494h1v3h-1zM332 500h1v3h-1zM332 506h1v3h-1zM332 512h1v3h-1zM332 518h1v3h-1zM332 524h1v3h-1zM332 530h1v3h-1zM332 536h1v3h-1zM332 542h1v3h-1zM332 548h1v2h-1zM364 423h1v2h-1zM364 428h1v3h-1zM364 434h1v3h-1zM364 440h1v3h-1zM364 446h1v3h-1zM364 452h1v3h-1zM364 458h1v3h-1zM364 464h1v3h-1zM364 470h1v3h-1zM364 476h1v3h-1zM364 482h1v3h-1zM364 488h1v3h-1zM364 494h1v3h-1zM364 500h1v3h-1zM364 506h1v3h-1zM364 512h1v3h-1zM364 518h1v3h-1zM364 524h1v3h-1zM364 530h1v3h-1zM364 536h1v3h-1zM364 542h1v3h-1zM364 548h1v2h-1zM396 423h1v2h-1zM396 428h1v3h-1zM396 434h1v3h-1zM396 440h1v3h-1zM396 446h1v3h-1zM396 452h1v3h-1zM396 458h1v3h-1zM396 464h1v3h-1zM396 470h1v3h-1zM396 476h1v3h-1zM396 482h1v3h-1zM396 488h1v3h-1zM396 494h1v3h-1zM396 500h1v3h-1zM396 506h1v3h-1zM396 512h1v3h-1zM396 518h1v3h-1zM396 524h1v3h-1zM396 530h1v3h-1zM396 536h1v3h-1zM396 542h1v3h-1zM396 548h1v2h-1zM428 423h1v2h-1zM428 428h1v3h-1zM428 434h1v3h-1zM428 440h1v3h-1zM428 446h1v3h-1zM428 452h1v3h-1zM428 458h1v3h-1zM428 464h1v3h-1zM428 470h1v3h-1zM428 476h1v3h-1zM428 482h1v3h-1zM428 488h1v3h-1zM428 494h1v3h-1zM428 500h1v3h-1zM428 506h1v3h-1zM428 512h1v3h-1zM428 518h1v3h-1zM428 524h1v3h-1zM428 530h1v3h-1zM428 536h1v3h-1zM428 542h1v3h-1zM428 548h1v2h-1zM460 423h1v2h-1zM460 428h1v3h-1zM460 434h1v3h-1zM460 440h1v3h-1zM460 446h1v3h-1zM460 452h1v3h-1zM460 458h1v3h-1zM460 464h1v3h-1zM460 470h1v3h-1zM460 476h1v3h-1zM460 482h1v3h-1zM460 488h1v3h-1zM460 494h1v3h-1zM460 500h1v3h-1zM460 506h1v3h-1zM460 512h1v3h-1zM460 518h1v3h-1zM460 524h1v3h-1zM460 530h1v3h-1zM460 536h1v3h-1zM460 542h1v3h-1zM460 548h1v2h-1zM492 423h1v2h-1zM492 428h1v3h-1zM492 434h1v3h-1zM492 440h1v3h-1zM492 446h1v3h-1zM492 452h1v3h-1zM492 458h1v3h-1zM492 464h1v3h-1zM492 470h1v3h-1zM492 476h1v3h-1zM492 482h1v3h-1zM492 488h1v3h-1zM492 494h1v3h-1zM492 500h1v3h-1zM492 506h1v3h-1zM492 512h1v3h-1zM492 518h1v3h-1zM492 524h1v3h-1zM492 530h1v3h-1zM492 536h1v3h-1zM492 542h1v3h-1zM492 548h1v2h-1zM524 423h1v2h-1zM524 428h1v3h-1zM524 434h1v3h-1zM524 440h1v3h-1zM524 446h1v3h-1zM524 452h1v3h-1zM524 458h1v3h-1zM524 464h1v3h-1zM524 470h1v3h-1zM524 476h1v3h-1zM524 482h1v3h-1zM524 488h1v3h-1zM524 494h1v3h-1zM524 500h1v3h-1zM524 506h1v3h-1zM524 512h1v3h-1zM524 518h1v3h-1zM524 524h1v3h-1zM524 530h1v3h-1zM524 536h1v3h-1zM524 542h1v3h-1zM524 548h1v2h-1zM556 423h1v2h-1zM556 428h1v3h-1zM556 434h1v3h-1zM556 440h1v3h-1zM556 446h1v3h-1zM556 452h1v3h-1zM556 458h1v3h-1zM556 464h1v3h-1zM556 470h1v3h-1zM556 476h1v3h-1zM556 482h1v3h-1zM556 488h1v3h-1zM556 494h1v3h-1zM556 500h1v3h-1zM556 506h1v3h-1zM556 512h1v3h-1zM556 518h1v3h-1zM556 524h1v3h-1zM556 530h1v3h-1zM556 536h1v3h-1zM556 542h1v3h-1zM556 548h1v2h-1zM588 423h1v2h-1zM588 428h1v3h-1zM588 434h1v3h-1zM588 440h1v3h-1zM588 446h1v3h-1zM588 452h1v3h-1zM588 458h1v3h-1zM588 464h1v3h-1zM588 470h1v3h-1zM588 476h1v3h-1zM588 482h1v3h-1zM588 488h1v3h-1zM588 494h1v3h-1zM588 500h1v3h-1zM588 506h1v3h-1zM588 512h1v3h-1zM588 518h1v3h-1zM588 524h1v3h-1zM588 530h1v3h-1zM588 536h1v3h-1zM588 542h1v3h-1zM588 548h1v2h-1zM620 423h1v2h-1zM620 428h1v3h-1zM620 434h1v3h-1zM620 440h1v3h-1zM620 446h1v3h-1zM620 452h1v3h-1zM620 458h1v3h-1zM620 464h1v3h-1zM620 470h1v3h-1zM620 476h1v3h-1zM620 482h1v3h-1zM620 488h1v3h-1zM620 494h1v3h-1zM620 500h1v3h-1zM620 506h1v3h-1zM620 512h1v3h-1zM620 518h1v3h-1zM620 524h1v3h-1zM620 530h1v3h-1zM620 536h1v3h-1zM620 542h1v3h-1zM620 548h1v2h-1zM652 423h1v2h-1zM652 428h1v3h-1zM652 434h1v3h-1zM652 440h1v3h-1zM652 446h1v3h-1zM652 452h1v3h-1zM652 458h1v3h-1zM652 464h1v3h-1zM652 470h1v3h-1zM652 476h1v3h-1zM652 482h1v3h-1zM652 488h1v3h-1zM652 494h1v3h-1zM652 500h1v3h-1zM652 506h1v3h-1zM652 512h1v3h-1zM652 518h1v3h-1zM652 524h1v3h-1zM652 530h1v3h-1zM652 536h1v3h-1zM652 542h1v3h-1zM652 548h1v2h-1zM684 423h1v2h-1zM684 428h1v3h-1zM684 434h1v3h-1zM684 440h1v3h-1zM684 446h1v3h-1zM684 452h1v3h-1zM684 458h1v3h-1zM684 464h1v3h-1zM684 470h1v3h-1zM684 476h1v3h-1zM684 482h1v3h-1zM684 488h1v3h-1zM684 494h1v3h-1zM684 500h1v3h-1zM684 506h1v3h-1zM684 512h1v3h-1zM684 518h1v3h-1zM684 524h1v3h-1zM684 530h1v3h-1zM684 536h1v3h-1zM684 542h1v3h-1zM684 548h1v2h-1zM716 423h1v2h-1zM716 428h1v3h-1zM716 434h1v3h-1zM716 440h1v3h-1zM716 446h1v3h-1zM716 452h1v3h-1zM716 458h1v3h-1zM716 464h1v3h-1zM716 470h1v3h-1zM716 476h1v3h-1zM716 482h1v3h-1zM716 488h1v3h-1zM716 494h1v3h-1zM716 500h1v3h-1zM716 506h1v3h-1zM716 512h1v3h-1zM716 518h1v3h-1zM716 524h1v3h-1zM716 530h1v3h-1zM716 536h1v3h-1zM716 542h1v3h-1zM716 548h1v2h-1zM748 423h1v2h-1zM748 428h1v3h-1zM748 434h1v3h-1zM748 440h1v3h-1zM748 446h1v3h-1zM748 452h1v3h-1zM748 458h1v3h-1zM748 464h1v3h-1zM748 470h1v3h-1zM748 476h1v3h-1zM748 482h1v3h-1zM748 488h1v3h-1zM748 494h1v3h-1zM748 500h1v3h-1zM748 506h1v3h-1zM748 512h1v3h-1zM748 518h1v3h-1zM748 524h1v3h-1zM748 530h1v3h-1zM748 536h1v3h-1zM748 542h1v3h-1zM748 548h1v2h-1zM13 56h3v1h-3zM19 56h3v1h-3zM25 56h3v1h-3zM31 56h3v1h-3zM37 56h3v1h-3zM43 56h3v1h-3zM49 56h3v1h-3zM55 56h3v1h-3zM61 56h3v1h-3zM67 56h3v1h-3zM73 56h3v1h-3zM79 56h3v1h-3zM85 56h3v1h-3zM91 56h3v1h-3zM97 56h3v1h-3zM103 56h3v1h-3zM109 56h3v1h-3zM115 56h3v1h-3zM121 56h3v1h-3zM127 56h3v1h-3zM133 56h3v1h-3zM139 56h3v1h-3zM145 56h3v1h-3zM151 56h3v1h-3zM157 56h3v1h-3zM163 56h3v1h-3zM169 56h3v1h-3zM175 56h3v1h-3zM181 56h3v1h-3zM187 56h3v1h-3zM193 56h3v1h-3zM199 56h3v1h-3zM205 56h3v1h-3zM211 56h3v1h-3zM217 56h3v1h-3zM223 56h3v1h-3zM229 56h3v1h-3zM235 56h3v1h-3zM241 56h3v1h-3zM247 56h3v1h-3zM253 56h3v1h-3zM259 56h3v1h-3zM265 56h3v1h-3zM271 56h3v1h-3zM277 56h3v1h-3zM283 56h3v1h-3zM289 56h3v1h-3zM295 56h3v1h-3zM301 56h3v1h-3zM307 56h3v1h-3zM313 56h3v1h-3zM319 56h3v1h-3zM325 56h3v1h-3zM331 56h3v1h-3zM337 56h3v1h-3zM343 56h3v1h-3zM349 56h3v1h-3zM355 56h3v1h-3zM361 56h3v1h-3zM367 56h3v1h-3zM373 56h3v1h-3zM379 56h3v1h-3zM385 56h3v1h-3zM391 56h3v1h-3zM397 56h3v1h-3zM403 56h3v1h-3zM409 56h3v1h-3zM415 56h3v1h-3zM421 56h3v1h-3zM427 56h3v1h-3zM433 56h3v1h-3zM439 56h3v1h-3zM445 56h3v1h-3zM451 56h3v1h-3zM457 56h3v1h-3zM463 56h3v1h-3zM469 56h3v1h-3zM475 56h3v1h-3zM481 56h3v1h-3zM487 56h3v1h-3zM493 56h3v1h-3zM499 56h3v1h-3zM505 56h3v1h-3zM511 56h3v1h-3zM517 56h3v1h-3zM523 56h3v1h-3zM529 56h3v1h-3zM535 56h3v1h-3zM541 56h3v1h-3zM547 56h3v1h-3zM553 56h3v1h-3zM559 56h3v1h-3zM565 56h3v1h-3zM571 56h3v1h-3zM577 56h3v1h-3zM583 56h3v1h-3zM589 56h3v1h-3zM595 56h3v1h-3zM601 56h3v1h-3zM607 56h3v1h-3zM613 56h3v1h-3zM619 56h3v1h-3zM625 56h3v1h-3zM631 56h3v1h-3zM637 56h3v1h-3zM643 56h3v1h-3zM649 56h3v1h-3zM655 56h3v1h-3zM661 56h3v1h-3zM667 56h3v1h-3zM673 56h3v1h-3zM679 56h3v1h-3zM685 56h3v1h-3zM691 56h3v1h-3zM697 56h3v1h-3zM703 56h3v1h-3zM709 56h3v1h-3zM715 56h3v1h-3zM721 56h3v1h-3zM727 56h3v1h-3zM733 56h3v1h-3zM739 56h3v1h-3zM745 56h3v1h-3zM751 56h3v1h-3zM757 56h3v1h-3zM763 56h1v1h-1zM13 89h3v1h-3zM19 89h3v1h-3zM25 89h3v1h-3zM31 89h3v1h-3zM37 89h3v1h-3zM43 89h3v1h-3zM49 89h3v1h-3zM55 89h3v1h-3zM61 89h3v1h-3zM67 89h3v1h-3zM73 89h3v1h-3zM79 89h3v1h-3zM85 89h3v1h-3zM91 89h3v1h-3zM97 89h3v1h-3zM103 89h3v1h-3zM109 89h3v1h-3zM115 89h3v1h-3zM121 89h3v1h-3zM127 89h3v1h-3zM133 89h3v1h-3zM139 89h3v1h-3zM145 89h3v1h-3zM151 89h3v1h-3zM157 89h3v1h-3zM163 89h3v1h-3zM169 89h3v1h-3zM175 89h3v1h-3zM181 89h3v1h-3zM187 89h3v1h-3zM193 89h3v1h-3zM199 89h3v1h-3zM205 89h3v1h-3zM211 89h3v1h-3zM217 89h3v1h-3zM223 89h3v1h-3zM229 89h3v1h-3zM235 89h3v1h-3zM241 89h3v1h-3zM247 89h3v1h-3zM253 89h3v1h-3zM259 89h3v1h-3zM265 89h3v1h-3zM271 89h3v1h-3zM277 89h3v1h-3zM283 89h3v1h-3zM289 89h3v1h-3zM295 89h3v1h-3zM301 89h3v1h-3zM307 89h3v1h-3zM313 89h3v1h-3zM319 89h3v1h-3zM325 89h3v1h-3zM331 89h3v1h-3zM337 89h3v1h-3zM343 89h3v1h-3zM349 89h3v1h-3zM355 89h3v1h-3zM361 89h3v1h-3zM367 89h3v1h-3zM373 89h3v1h-3zM379 89h3v1h-3zM385 89h3v1h-3zM391 89h3v1h-3zM397 89h3v1h-3zM403 89h3v1h-3zM409 89h3v1h-3zM415 89h3v1h-3zM421 89h3v1h-3zM427 89h3v1h-3zM433 89h3v1h-3zM439 89h3v1h-3zM445 89h3v1h-3zM451 89h3v1h-3zM457 89h3v1h-3zM463 89h3v1h-3zM469 89h3v1h-3zM475 89h3v1h-3zM481 89h3v1h-3zM487 89h3v1h-3zM493 89h3v1h-3zM499 89h3v1h-3zM505 89h3v1h-3zM511 89h3v1h-3zM517 89h3v1h-3zM523 89h3v1h-3zM529 89h3v1h-3zM535 89h3v1h-3zM541 89h3v1h-3zM547 89h3v1h-3zM553 89h3v1h-3zM559 89h3v1h-3zM565 89h3v1h-3zM571 89h3v1h-3zM577 89h3v1h-3zM583 89h3v1h-3zM589 89h3v1h-3zM595 89h3v1h-3zM601 89h3v1h-3zM607 89h3v1h-3zM613 89h3v1h-3zM619 89h3v1h-3zM625 89h3v1h-3zM631 89h3v1h-3zM637 89h3v1h-3zM643 89h3v1h-3zM649 89h3v1h-3zM655 89h3v1h-3zM661 89h3v1h-3zM667 89h3v1h-3zM673 89h3v1h-3zM679 89h3v1h-3zM685 89h3v1h-3zM691 89h3v1h-3zM697 89h3v1h-3zM703 89h3v1h-3zM709 89h3v1h-3zM715 89h3v1h-3zM721 89h3v1h-3zM727 89h3v1h-3zM733 89h3v1h-3zM739 89h3v1h-3zM745 89h3v1h-3zM751 89h3v1h-3zM757 89h3v1h-3zM763 89h1v1h-1zM13 122h3v1h-3zM19 122h3v1h-3zM25 122h3v1h-3zM31 122h3v1h-3zM37 122h3v1h-3zM43 122h3v1h-3zM49 122h3v1h-3zM55 122h3v1h-3zM61 122h3v1h-3zM67 122h3v1h-3zM73 122h3v1h-3zM79 122h3v1h-3zM85 122h3v1h-3zM91 122h3v1h-3zM97 122h3v1h-3zM103 122h3v1h-3zM109 122h3v1h-3zM115 122h3v1h-3zM121 122h3v1h-3zM127 122h3v1h-3zM133 122h3v1h-3zM139 122h3v1h-3zM145 122h3v1h-3zM151 122h3v1h-3zM157 122h3v1h-3zM163 122h3v1h-3zM169 122h3v1h-3zM175 122h3v1h-3zM181 122h3v1h-3zM187 122h3v1h-3zM193 122h3v1h-3zM199 122h3v1h-3zM205 122h3v1h-3zM211 122h3v1h-3zM217 122h3v1h-3zM223 122h3v1h-3zM229 122h3v1h-3zM235 122h3v1h-3zM241 122h3v1h-3zM247 122h3v1h-3zM253 122h3v1h-3zM259 122h3v1h-3zM265 122h3v1h-3zM271 122h3v1h-3zM277 122h3v1h-3zM283 122h3v1h-3zM289 122h3v1h-3zM295 122h3v1h-3zM301 122h3v1h-3zM307 122h3v1h-3zM313 122h3v1h-3zM319 122h3v1h-3zM325 122h3v1h-3zM331 122h3v1h-3zM337 122h3v1h-3zM343 122h3v1h-3zM349 122h3v1h-3zM355 122h3v1h-3zM361 122h3v1h-3zM367 122h3v1h-3zM373 122h3v1h-3zM379 122h3v1h-3zM385 122h3v1h-3zM391 122h3v1h-3zM397 122h3v1h-3zM403 122h3v1h-3zM409 122h3v1h-3zM415 122h3v1h-3zM421 122h3v1h-3zM427 122h3v1h-3zM433 122h3v1h-3zM439 122h3v1h-3zM445 122h3v1h-3zM451 122h3v1h-3zM457 122h3v1h-3zM463 122h3v1h-3zM469 122h3v1h-3zM475 122h3v1h-3zM481 122h3v1h-3zM487 122h3v1h-3zM493 122h3v1h-3zM499 122h3v1h-3zM505 122h3v1h-3zM511 122h3v1h-3zM517 122h3v1h-3zM523 122h3v1h-3zM529 122h3v1h-3zM535 122h3v1h-3zM541 122h3v1h-3zM547 122h3v1h-3zM553 122h3v1h-3zM559 122h3v1h-3zM565 122h3v1h-3zM571 122h3v1h-3zM577 122h3v1h-3zM583 122h3v1h-3zM589 122h3v1h-3zM595 122h3v1h-3zM601 122h3v1h-3zM607 122h3v1h-3zM613 122h3v1h-3zM619 122h3v1h-3zM625 122h3v1h-3zM631 122h3v1h-3zM637 122h3v1h-3zM643 122h3v1h-3zM649 122h3v1h-3zM655 122h3v1h-3zM661 122h3v1h-3zM667 122h3v1h-3zM673 122h3v1h-3zM679 122h3v1h-3zM685 122h3v1h-3zM691 122h3v1h-3zM697 122h3v1h-3zM703 122h3v1h-3zM709 122h3v1h-3zM715 122h3v1h-3zM721 122h3v1h-3zM727 122h3v1h-3zM733 122h3v1h-3zM739 122h3v1h-3zM745 122h3v1h-3zM751 122h3v1h-3zM757 122h3v1h-3zM763 122h1v1h-1zM13 155h3v1h-3zM19 155h3v1h-3zM25 155h3v1h-3zM31 155h3v1h-3zM37 155h3v1h-3zM43 155h3v1h-3zM49 155h3v1h-3zM55 155h3v1h-3zM61 155h3v1h-3zM67 155h3v1h-3zM73 155h3v1h-3zM79 155h3v1h-3zM85 155h3v1h-3zM91 155h3v1h-3zM97 155h3v1h-3zM103 155h3v1h-3zM109 155h3v1h-3zM115 155h3v1h-3zM121 155h3v1h-3zM127 155h3v1h-3zM133 155h3v1h-3zM139 155h3v1h-3zM145 155h3v1h-3zM151 155h3v1h-3zM157 155h3v1h-3zM163 155h3v1h-3zM169 155h3v1h-3zM175 155h3v1h-3zM181 155h3v1h-3zM187 155h3v1h-3zM193 155h3v1h-3zM199 155h3v1h-3zM205 155h3v1h-3zM211 155h3v1h-3zM217 155h3v1h-3zM223 155h3v1h-3zM229 155h3v1h-3zM235 155h3v1h-3zM241 155h3v1h-3zM247 155h3v1h-3zM253 155h3v1h-3zM259 155h3v1h-3zM265 155h3v1h-3zM271 155h3v1h-3zM277 155h3v1h-3zM283 155h3v1h-3zM289 155h3v1h-3zM295 155h3v1h-3zM301 155h3v1h-3zM307 155h3v1h-3zM313 155h3v1h-3zM319 155h3v1h-3zM325 155h3v1h-3zM331 155h3v1h-3zM337 155h3v1h-3zM343 155h3v1h-3zM349 155h3v1h-3zM355 155h3v1h-3zM361 155h3v1h-3zM367 155h3v1h-3zM373 155h3v1h-3zM379 155h3v1h-3zM385 155h3v1h-3zM391 155h3v1h-3zM397 155h3v1h-3zM403 155h3v1h-3zM409 155h3v1h-3zM415 155h3v1h-3zM421 155h3v1h-3zM427 155h3v1h-3zM433 155h3v1h-3zM439 155h3v1h-3zM445 155h3v1h-3zM451 155h3v1h-3zM457 155h3v1h-3zM463 155h3v1h-3zM469 155h3v1h-3zM475 155h3v1h-3zM481 155h3v1h-3zM487 155h3v1h-3zM493 155h3v1h-3zM499 155h3v1h-3zM505 155h3v1h-3zM511 155h3v1h-3zM517 155h3v1h-3zM523 155h3v1h-3zM529 155h3v1h-3zM535 155h3v1h-3zM541 155h3v1h-3zM547 155h3v1h-3zM553 155h3v1h-3zM559 155h3v1h-3zM565 155h3v1h-3zM571 155h3v1h-3zM577 155h3v1h-3zM583 155h3v1h-3zM589 155h3v1h-3zM595 155h3v1h-3zM601 155h3v1h-3zM607 155h3v1h-3zM613 155h3v1h-3zM619 155h3v1h-3zM625 155h3v1h-3zM631 155h3v1h-3zM637 155h3v1h-3zM643 155h3v1h-3zM649 155h3v1h-3zM655 155h3v1h-3zM661 155h3v1h-3zM667 155h3v1h-3zM673 155h3v1h-3zM679 155h3v1h-3zM685 155h3v1h-3zM691 155h3v1h-3zM697 155h3v1h-3zM703 155h3v1h-3zM709 155h3v1h-3zM715 155h3v1h-3zM721 155h3v1h-3zM727 155h3v1h-3zM733 155h3v1h-3zM739 155h3v1h-3zM745 155h3v1h-3zM751 155h3v1h-3zM757 155h3v1h-3zM763 155h1v1h-1zM13 188h3v1h-3zM19 188h3v1h-3zM25 188h3v1h-3zM31 188h3v1h-3zM37 188h3v1h-3zM43 188h3v1h-3zM49 188h3v1h-3zM55 188h3v1h-3zM61 188h3v1h-3zM67 188h3v1h-3zM73 188h3v1h-3zM79 188h3v1h-3zM85 188h3v1h-3zM91 188h3v1h-3zM97 188h3v1h-3zM103 188h3v1h-3zM109 188h3v1h-3zM115 188h3v1h-3zM121 188h3v1h-3zM127 188h3v1h-3zM133 188h3v1h-3zM139 188h3v1h-3zM145 188h3v1h-3zM151 188h3v1h-3zM157 188h3v1h-3zM163 188h3v1h-3zM169 188h3v1h-3zM175 188h3v1h-3zM181 188h3v1h-3zM187 188h3v1h-3zM193 188h3v1h-3zM199 188h3v1h-3zM205 188h3v1h-3zM211 188h3v1h-3zM217 188h3v1h-3zM223 188h3v1h-3zM229 188h3v1h-3zM235 188h3v1h-3zM241 188h3v1h-3zM247 188h3v1h-3zM253 188h3v1h-3zM259 188h3v1h-3zM265 188h3v1h-3zM271 188h3v1h-3zM277 188h3v1h-3zM283 188h3v1h-3zM289 188h3v1h-3zM295 188h3v1h-3zM301 188h3v1h-3zM307 188h3v1h-3zM313 188h3v1h-3zM319 188h3v1h-3zM325 188h3v1h-3zM331 188h3v1h-3zM337 188h3v1h-3zM343 188h3v1h-3zM349 188h3v1h-3zM355 188h3v1h-3zM361 188h3v1h-3zM367 188h3v1h-3zM373 188h3v1h-3zM379 188h3v1h-3zM385 188h3v1h-3zM391 188h3v1h-3zM397 188h3v1h-3zM403 188h3v1h-3zM409 188h3v1h-3zM415 188h3v1h-3zM421 188h3v1h-3zM427 188h3v1h-3zM433 188h3v1h-3zM439 188h3v1h-3zM445 188h3v1h-3zM451 188h3v1h-3zM457 188h3v1h-3zM463 188h3v1h-3zM469 188h3v1h-3zM475 188h3v1h-3zM481 188h3v1h-3zM487 188h3v1h-3zM493 188h3v1h-3zM499 188h3v1h-3zM505 188h3v1h-3zM511 188h3v1h-3zM517 188h3v1h-3zM523 188h3v1h-3zM529 188h3v1h-3zM535 188h3v1h-3zM541 188h3v1h-3zM547 188h3v1h-3zM553 188h3v1h-3zM559 188h3v1h-3zM565 188h3v1h-3zM571 188h3v1h-3zM577 188h3v1h-3zM583 188h3v1h-3zM589 188h3v1h-3zM595 188h3v1h-3zM601 188h3v1h-3zM607 188h3v1h-3zM613 188h3v1h-3zM619 188h3v1h-3zM625 188h3v1h-3zM631 188h3v1h-3zM637 188h3v1h-3zM643 188h3v1h-3zM649 188h3v1h-3zM655 188h3v1h-3zM661 188h3v1h-3zM667 188h3v1h-3zM673 188h3v1h-3zM679 188h3v1h-3zM685 188h3v1h-3zM691 188h3v1h-3zM697 188h3v1h-3zM703 188h3v1h-3zM709 188h3v1h-3zM715 188h3v1h-3zM721 188h3v1h-3zM727 188h3v1h-3zM733 188h3v1h-3zM739 188h3v1h-3zM745 188h3v1h-3zM751 188h3v1h-3zM757 188h3v1h-3zM763 188h1v1h-1zM13 221h3v1h-3zM19 221h3v1h-3zM25 221h3v1h-3zM31 221h3v1h-3zM37 221h3v1h-3zM43 221h3v1h-3zM49 221h3v1h-3zM55 221h3v1h-3zM61 221h3v1h-3zM67 221h3v1h-3zM73 221h3v1h-3zM79 221h3v1h-3zM85 221h3v1h-3zM91 221h3v1h-3zM97 221h3v1h-3zM103 221h3v1h-3zM109 221h3v1h-3zM115 221h3v1h-3zM121 221h3v1h-3zM127 221h3v1h-3zM133 221h3v1h-3zM139 221h3v1h-3zM145 221h3v1h-3zM151 221h3v1h-3zM157 221h3v1h-3zM163 221h3v1h-3zM169 221h3v1h-3zM175 221h3v1h-3zM181 221h3v1h-3zM187 221h3v1h-3zM193 221h3v1h-3zM199 221h3v1h-3zM205 221h3v1h-3zM211 221h3v1h-3zM217 221h3v1h-3zM223 221h3v1h-3zM229 221h3v1h-3zM235 221h3v1h-3zM241 221h3v1h-3zM247 221h3v1h-3zM253 221h3v1h-3zM259 221h3v1h-3zM265 221h3v1h-3zM271 221h3v1h-3zM277 221h3v1h-3zM283 221h3v1h-3zM289 221h3v1h-3zM295 221h3v1h-3zM301 221h3v1h-3zM307 221h3v1h-3zM313 221h3v1h-3zM319 221h3v1h-3zM325 221h3v1h-3zM331 221h3v1h-3zM337 221h3v1h-3zM343 221h3v1h-3zM349 221h3v1h-3zM355 221h3v1h-3zM361 221h3v1h-3zM367 221h3v1h-3zM373 221h3v1h-3zM379 221h3v1h-3zM385 221h3v1h-3zM391 221h3v1h-3zM397 221h3v1h-3zM403 221h3v1h-3zM409 221h3v1h-3zM415 221h3v1h-3zM421 221h3v1h-3zM427 221h3v1h-3zM433 221h3v1h-3zM439 221h3v1h-3zM445 221h3v1h-3zM451 221h3v1h-3zM457 221h3v1h-3zM463 221h3v1h-3zM469 221h3v1h-3zM475 221h3v1h-3zM481 221h3v1h-3zM487 221h3v1h-3zM493 221h3v1h-3zM499 221h3v1h-3zM505 221h3v1h-3zM511 221h3v1h-3zM517 221h3v1h-3zM523 221h3v1h-3zM529 221h3v1h-3zM535 221h3v1h-3zM541 221h3v1h-3zM547 221h3v1h-3zM553 221h3v1h-3zM559 221h3v1h-3zM565 221h3v1h-3zM571 221h3v1h-3zM577 221h3v1h-3zM583 221h3v1h-3zM589 221h3v1h-3zM595 221h3v1h-3zM601 221h3v1h-3zM607 221h3v1h-3zM613 221h3v1h-3zM619 221h3v1h-3zM625 221h3v1h-3zM631 221h3v1h-3zM637 221h3v1h-3zM643 221h3v1h-3zM649 221h3v1h-3zM655 221h3v1h-3zM661 221h3v1h-3zM667 221h3v1h-3zM673 221h3v1h-3zM679 221h3v1h-3zM685 221h3v1h-3zM691 221h3v1h-3zM697 221h3v1h-3zM703 221h3v1h-3zM709 221h3v1h-3zM715 221h3v1h-3zM721 221h3v1h-3zM727 221h3v1h-3zM733 221h3v1h-3zM739 221h3v1h-3zM745 221h3v1h-3zM751 221h3v1h-3zM757 221h3v1h-3zM763 221h1v1h-1zM13 254h3v1h-3zM19 254h3v1h-3zM25 254h3v1h-3zM31 254h3v1h-3zM37 254h3v1h-3zM43 254h3v1h-3zM49 254h3v1h-3zM55 254h3v1h-3zM61 254h3v1h-3zM67 254h3v1h-3zM73 254h3v1h-3zM79 254h3v1h-3zM85 254h3v1h-3zM91 254h3v1h-3zM97 254h3v1h-3zM103 254h3v1h-3zM109 254h3v1h-3zM115 254h3v1h-3zM121 254h3v1h-3zM127 254h3v1h-3zM133 254h3v1h-3zM139 254h3v1h-3zM145 254h3v1h-3zM151 254h3v1h-3zM157 254h3v1h-3zM163 254h3v1h-3zM169 254h3v1h-3zM175 254h3v1h-3zM181 254h3v1h-3zM187 254h3v1h-3zM193 254h3v1h-3zM199 254h3v1h-3zM205 254h3v1h-3zM211 254h3v1h-3zM217 254h3v1h-3zM223 254h3v1h-3zM229 254h3v1h-3zM235 254h3v1h-3zM241 254h3v1h-3zM247 254h3v1h-3zM253 254h3v1h-3zM259 254h3v1h-3zM265 254h3v1h-3zM271 254h3v1h-3zM277 254h3v1h-3zM283 254h3v1h-3zM289 254h3v1h-3zM295 254h3v1h-3zM301 254h3v1h-3zM307 254h3v1h-3zM313 254h3v1h-3zM319 254h3v1h-3zM325 254h3v1h-3zM331 254h3v1h-3zM337 254h3v1h-3zM343 254h3v1h-3zM349 254h3v1h-3zM355 254h3v1h-3zM361 254h3v1h-3zM367 254h3v1h-3zM373 254h3v1h-3zM379 254h3v1h-3zM385 254h3v1h-3zM391 254h3v1h-3zM397 254h3v1h-3zM403 254h3v1h-3zM409 254h3v1h-3zM415 254h3v1h-3zM421 254h3v1h-3zM427 254h3v1h-3zM433 254h3v1h-3zM439 254h3v1h-3zM445 254h3v1h-3zM451 254h3v1h-3zM457 254h3v1h-3zM463 254h3v1h-3zM469 254h3v1h-3zM475 254h3v1h-3zM481 254h3v1h-3zM487 254h3v1h-3zM493 254h3v1h-3zM499 254h3v1h-3zM505 254h3v1h-3zM511 254h3v1h-3zM517 254h3v1h-3zM523 254h3v1h-3zM529 254h3v1h-3zM535 254h3v1h-3zM541 254h3v1h-3zM547 254h3v1h-3zM553 254h3v1h-3zM559 254h3v1h-3zM565 254h3v1h-3zM571 254h3v1h-3zM577 254h3v1h-3zM583 254h3v1h-3zM589 254h3v1h-3zM595 254h3v1h-3zM601 254h3v1h-3zM607 254h3v1h-3zM613 254h3v1h-3zM619 254h3v1h-3zM625 254h3v1h-3zM631 254h3v1h-3zM637 254h3v1h-3zM643 254h3v1h-3zM649 254h3v1h-3zM655 254h3v1h-3zM661 254h3v1h-3zM667 254h3v1h-3zM673 254h3v1h-3zM679 254h3v1h-3zM685 254h3v1h-3zM691 254h3v1h-3zM697 254h3v1h-3zM703 254h3v1h-3zM709 254h3v1h-3zM715 254h3v1h-3zM721 254h3v1h-3zM727 254h3v1h-3zM733 254h3v1h-3zM739 254h3v1h-3zM745 254h3v1h-3zM751 254h3v1h-3zM757 254h3v1h-3zM763 254h1v1h-1zM13 287h3v1h-3zM19 287h3v1h-3zM25 287h3v1h-3zM31 287h3v1h-3zM37 287h3v1h-3zM43 287h3v1h-3zM49 287h3v1h-3zM55 287h3v1h-3zM61 287h3v1h-3zM67 287h3v1h-3zM73 287h3v1h-3zM79 287h3v1h-3zM85 287h3v1h-3zM91 287h3v1h-3zM97 287h3v1h-3zM103 287h3v1h-3zM109 287h3v1h-3zM115 287h3v1h-3zM121 287h3v1h-3zM127 287h3v1h-3zM133 287h3v1h-3zM139 287h3v1h-3zM145 287h3v1h-3zM151 287h3v1h-3zM157 287h3v1h-3zM163 287h3v1h-3zM169 287h3v1h-3zM175 287h3v1h-3zM181 287h3v1h-3zM187 287h3v1h-3zM193 287h3v1h-3zM199 287h3v1h-3zM205 287h3v1h-3zM211 287h3v1h-3zM217 287h3v1h-3zM223 287h3v1h-3zM229 287h3v1h-3zM235 287h3v1h-3zM241 287h3v1h-3zM247 287h3v1h-3zM253 287h3v1h-3zM259 287h3v1h-3zM265 287h3v1h-3zM271 287h3v1h-3zM277 287h3v1h-3zM283 287h3v1h-3zM289 287h3v1h-3zM295 287h3v1h-3zM301 287h3v1h-3zM307 287h3v1h-3zM313 287h3v1h-3zM319 287h3v1h-3zM325 287h3v1h-3zM331 287h3v1h-3zM337 287h3v1h-3zM343 287h3v1h-3zM349 287h3v1h-3zM355 287h3v1h-3zM361 287h3v1h-3zM367 287h3v1h-3zM373 287h3v1h-3zM379 287h3v1h-3zM385 287h3v1h-3zM391 287h3v1h-3zM397 287h3v1h-3zM403 287h3v1h-3zM409 287h3v1h-3zM415 287h3v1h-3zM421 287h3v1h-3zM427 287h3v1h-3zM433 287h3v1h-3zM439 287h3v1h-3zM445 287h3v1h-3zM451 287h3v1h-3zM457 287h3v1h-3zM463 287h3v1h-3zM469 287h3v1h-3zM475 287h3v1h-3zM481 287h3v1h-3zM487 287h3v1h-3zM493 287h3v1h-3zM499 287h3v1h-3zM505 287h3v1h-3zM511 287h3v1h-3zM517 287h3v1h-3zM523 287h3v1h-3zM529 287h3v1h-3zM535 287h3v1h-3zM541 287h3v1h-3zM547 287h3v1h-3zM553 287h3v1h-3zM559 287h3v1h-3zM565 287h3v1h-3zM571 287h3v1h-3zM577 287h3v1h-3zM583 287h3v1h-3zM589 287h3v1h-3zM595 287h3v1h-3zM601 287h3v1h-3zM607 287h3v1h-3zM613 287h3v1h-3zM619 287h3v1h-3zM625 287h3v1h-3zM631 287h3v1h-3zM637 287h3v1h-3zM643 287h3v1h-3zM649 287h3v1h-3zM655 287h3v1h-3zM661 287h3v1h-3zM667 287h3v1h-3zM673 287h3v1h-3zM679 287h3v1h-3zM685 287h3v1h-3zM691 287h3v1h-3zM697 287h3v1h-3zM703 287h3v1h-3zM709 287h3v1h-3zM715 287h3v1h-3zM721 287h3v1h-3zM727 287h3v1h-3zM733 287h3v1h-3zM739 287h3v1h-3zM745 287h3v1h-3zM751 287h3v1h-3zM757 287h3v1h-3zM763 287h1v1h-1zM13 492h3v1h-3zM19 492h3v1h-3zM25 492h3v1h-3zM31 492h3v1h-3zM37 492h3v1h-3zM43 492h3v1h-3zM49 492h3v1h-3zM55 492h3v1h-3zM61 492h3v1h-3zM67 492h3v1h-3zM73 492h3v1h-3zM79 492h3v1h-3zM85 492h3v1h-3zM91 492h3v1h-3zM97 492h3v1h-3zM103 492h3v1h-3zM109 492h3v1h-3zM115 492h3v1h-3zM121 492h3v1h-3zM127 492h3v1h-3zM133 492h3v1h-3zM139 492h3v1h-3zM145 492h3v1h-3zM151 492h3v1h-3zM157 492h3v1h-3zM163 492h3v1h-3zM169 492h3v1h-3zM175 492h3v1h-3zM181 492h3v1h-3zM187 492h3v1h-3zM193 492h3v1h-3zM199 492h3v1h-3zM205 492h3v1h-3zM211 492h3v1h-3zM217 492h3v1h-3zM223 492h3v1h-3zM229 492h3v1h-3zM235 492h3v1h-3zM241 492h3v1h-3zM247 492h3v1h-3zM253 492h3v1h-3zM259 492h3v1h-3zM265 492h3v1h-3zM271 492h3v1h-3zM277 492h3v1h-3zM283 492h3v1h-3zM289 492h3v1h-3zM295 492h3v1h-3zM301 492h3v1h-3zM307 492h3v1h-3zM313 492h3v1h-3zM319 492h3v1h-3zM325 492h3v1h-3zM331 492h3v1h-3zM337 492h3v1h-3zM343 492h3v1h-3zM349 492h3v1h-3zM355 492h3v1h-3zM361 492h3v1h-3zM367 492h3v1h-3zM373 492h3v1h-3zM379 492h3v1h-3zM385 492h3v1h-3zM391 492h3v1h-3zM397 492h3v1h-3zM403 492h3v1h-3zM409 492h3v1h-3zM415 492h3v1h-3zM421 492h3v1h-3zM427 492h3v1h-3zM433 492h3v1h-3zM439 492h3v1h-3zM445 492h3v1h-3zM451 492h3v1h-3zM457 492h3v1h-3zM463 492h3v1h-3zM469 492h3v1h-3zM475 492h3v1h-3zM481 492h3v1h-3zM487 492h3v1h-3zM493 492h3v1h-3zM499 492h3v1h-3zM505 492h3v1h-3zM511 492h3v1h-3zM517 492h3v1h-3zM523 492h3v1h-3zM529 492h3v1h-3zM535 492h3v1h-3zM541 492h3v1h-3zM547 492h3v1h-3zM553 492h3v1h-3zM559 492h3v1h-3zM565 492h3v1h-3zM571 492h3v1h-3zM577 492h3v1h-3zM583 492h3v1h-3zM589 492h3v1h-3zM595 492h3v1h-3zM601 492h3v1h-3zM607 492h3v1h-3zM613 492h3v1h-3zM619 492h3v1h-3zM625 492h3v1h-3zM631 492h3v1h-3zM637 492h3v1h-3zM643 492h3v1h-3zM649 492h3v1h-3zM655 492h3v1h-3zM661 492h3v1h-3zM667 492h3v1h-3zM673 492h3v1h-3zM679 492h3v1h-3zM685 492h3v1h-3zM691 492h3v1h-3zM697 492h3v1h-3zM703 492h3v1h-3zM709 492h3v1h-3zM715 492h3v1h-3zM721 492h3v1h-3zM727 492h3v1h-3zM733 492h3v1h-3zM739 492h3v1h-3zM745 492h3v1h-3zM751 492h3v1h-3zM757 492h3v1h-3zM763 492h1v1h-1z" fill="#778899" shape-rendering="crispEdges"/>
<path d="M13 331h3v1h-3zM19 331h3v1h-3zM25 331h3v1h-3zM31 331h3v1h-3zM37 331h3v1h-3zM43 331h3v1h-3zM49 331h3v1h-3zM55 331h3v1h-3zM61 331h3v1h-3zM67 331h3v1h-3zM73 331h3v1h-3zM79 331h3v1h-3zM85 331h3v1h-3zM91 331h3v1h-3zM97 331h3v1h-3zM103 331h3v1h-3zM109 331h3v1h-3zM115 331h3v1h-3zM121 331h3v1h-3zM127 331h3v1h-3zM133 331h3v1h-3zM139 331h3v1h-3zM145 331h3v1h-3zM151 331h3v1h-3zM157 331h3v1h-3zM163 331h3v1h-3zM169 331h3v1h-3zM175 331h3v1h-3zM181 331h3v1h-3zM187 331h3v1h-3zM193 331h3v1h-3zM199 331h3v1h-3zM205 331h3v1h-3zM211 331h3v1h-3zM217 331h3v1h-3zM223 331h3v1h-3zM229 331h3v1h-3zM235 331h3v1h-3zM241 331h3v1h-3zM247 331h3v1h-3zM253 331h3v1h-3zM259 331h3v1h-3zM265 331h3v1h-3zM271 331h3v1h-3zM277 331h3v1h-3zM283 331h3v1h-3zM289 331h3v1h-3zM295 331h3v1h-3zM301 331h3v1h-3zM307 331h3v1h-3zM313 331h3v1h-3zM319 331h3v1h-3zM325 331h3v1h-3zM331 331h3v1h-3zM337 331h3v1h-3zM343 331h3v1h-3zM349 331h3v1h-3zM355 331h3v1h-3zM361 331h3v1h-3zM367 331h3v1h-3zM373 331h3v1h-3zM379 331h3v1h-3zM385 331h3v1h-3zM391 331h3v1h-3zM397 331h3v1h-3zM403 331h3v1h-3zM409 331h3v1h-3zM415 331h3v1h-3zM421 331h3v1h-3zM427 331h3v1h-3zM433 331h3v1h-3zM439 331h3v1h-3zM445 331h3v1h-3zM451 331h3v1h-3zM457 331h3v1h-3zM463 331h3v1h-3zM469 331h3v1h-3zM475 331h3v1h-3zM481 331h3v1h-3zM487 331h3v1h-3zM493 331h3v1h-3zM499 331h3v1h-3zM505 331h3v1h-3zM511 331h3v1h-3zM517 331h3v1h-3zM523 331h3v1h-3zM529 331h3v1h-3zM535 331h3v1h-3zM541 331h3v1h-3zM547 331h3v1h-3zM553 331h3v1h-3zM559 331h3v1h-3zM565 331h3v1h-3zM571 331h3v1h-3zM577 331h3v1h-3zM583 331h3v1h-3zM589 331h3v1h-3zM595 331h3v1h-3zM601 331h3v1h-3zM607 331h3v1h-3zM613 331h3v1h-3zM619 331h3v1h-3zM625 331h3v1h-3zM631 331h3v1h-3zM637 331h3v1h-3zM643 331h3v1h-3zM649 331h3v1h-3zM655 331h3v1h-3zM661 331h3v1h-3zM667 331h3v1h-3zM673 331h3v1h-3zM679 331h3v1h-3zM685 331h3v1h-3zM691 331h3v1h-3zM697 331h3v1h-3zM703 331h3v1h-3zM709 331h3v1h-3zM715 331h3v1h-3zM721 331h3v1h-3zM727 331h3v1h-3zM733 331h3v1h-3zM739 331h3v1h-3zM745 331h3v1h-3zM751 331h3v1h-3zM757 331h3v1h-3zM763 331h1v1h-1zM13 356h3v1h-3zM19 356h3v1h-3zM25 356h3v1h-3zM31 356h3v1h-3zM37 356h3v1h-3zM43 356h3v1h-3zM49 356h3v1h-3zM55 356h3v1h-3zM61 356h3v1h-3zM67 356h3v1h-3zM73 356h3v1h-3zM79 356h3v1h-3zM85 356h3v1h-3zM91 356h3v1h-3zM97 356h3v1h-3zM103 356h3v1h-3zM109 356h3v1h-3zM115 356h3v1h-3zM121 356h3v1h-3zM127 356h3v1h-3zM133 356h3v1h-3zM139 356h3v1h-3zM145 356h3v1h-3zM151 356h3v1h-3zM157 356h3v1h-3zM163 356h3v1h-3zM169 356h3v1h-3zM175 356h3v1h-3zM181 356h3v1h-3zM187 356h3v1h-3zM193 356h3v1h-3zM199 356h3v1h-3zM205 356h3v1h-3zM211 356h3v1h-3zM217 356h3v1h-3zM223 356h3v1h-3zM229 356h3v1h-3zM235 356h3v1h-3zM241 356h3v1h-3zM247 356h3v1h-3zM253 356h3v1h-3zM259 356h3v1h-3zM265 356h3v1h-3zM271 356h3v1h-3zM277 356h3v1h-3zM283 356h3v1h-3zM289 356h3v1h-3zM295 356h3v1h-3zM301 356h3v1h-3zM307 356h3v1h-3zM313 356h3v1h-3zM319 356h3v1h-3zM325 356h3v1h-3zM331 356h3v1h-3zM337 356h3v1h-3zM343 356h3v1h-3zM349 356h3v1h-3zM355 356h3v1h-3zM361 356h3v1h-3zM367 356h3v1h-3zM373 356h3v1h-3zM379 356h3v1h-3zM385 356h3v1h-3zM391 356h3v1h-3zM397 356h3v1h-3zM403 356h3v1h-3zM409 356h3v1h-3zM415 356h3v1h-3zM421 356h3v1h-3zM427 356h3v1h-3zM433 356h3v1h-3zM439 356h3v1h-3zM445 356h3v1h-3zM451 356h3v1h-3zM457 356h3v1h-3zM463 356h3v1h-3zM469 356h3v1h-3zM475 356h3v1h-3zM481 356h3v1h-3zM487 356h3v1h-3zM493 356h3v1h-3zM499 356h3v1h-3zM505 356h3v1h-3zM511 356h3v1h-3zM517 356h3v1h-3zM523 356h3v1h-3zM529 356h3v1h-3zM535 356h3v1h-3zM541 356h3v1h-3zM547 356h3v1h-3zM553 356h3v1h-3zM559 356h3v1h-3zM565 356h3v1h-3zM571 356h3v1h-3zM577 356h3v1h-3zM583 356h3v1h-3zM589 356h3v1h-3zM595 356h3v1h-3zM601 356h3v1h-3zM607 356h3v1h-3zM613 356h3v1h-3zM619 356h3v1h-3zM625 356h3v1h-3zM631 356h3v1h-3zM637 356h3v1h-3zM643 356h3v1h-3zM649 356h3v1h-3zM655 356h3v1h-3zM661 356h3v1h-3zM667 356h3v1h-3zM673 356h3v1h-3zM679 356h3v1h-3zM685 356h3v1h-3zM691 356h3v1h-3zM697 356h3v1h-3zM703 356h3v1h-3zM709 356h3v1h-3zM715 356h3v1h-3zM721 356h3v1h-3zM727 356h3v1h-3zM733 356h3v1h-3zM739 356h3v1h-3zM745 356h3v1h-3zM751 356h3v1h-3zM757 356h3v1h-3zM763 356h1v1h-1zM13 382h3v1h-3zM19 382h3v1h-3zM25 382h3v1h-3zM31 382h3v1h-3zM37 382h3v1h-3zM43 382h3v1h-3zM49 382h3v1h-3zM55 382h3v1h-3zM61 382h3v1h-3zM67 382h3v1h-3zM73 382h3v1h-3zM79 382h3v1h-3zM85 382h3v1h-3zM91 382h3v1h-3zM97 382h3v1h-3zM103 382h3v1h-3zM109 382h3v1h-3zM115 382h3v1h-3zM121 382h3v1h-3zM127 382h3v1h-3zM133 382h3v1h-3zM139 382h3v1h-3zM145 382h3v1h-3zM151 382h3v1h-3zM157 382h3v1h-3zM163 382h3v1h-3zM169 382h3v1h-3zM175 382h3v1h-3zM181 382h3v1h-3zM187 382h3v1h-3zM193 382h3v1h-3zM199 382h3v1h-3zM205 382h3v1h-3zM211 382h3v1h-3zM217 382h3v1h-3zM223 382h3v1h-3zM229 382h3v1h-3zM235 382h3v1h-3zM241 382h3v1h-3zM247 382h3v1h-3zM253 382h3v1h-3zM259 382h3v1h-3zM265 382h3v1h-3zM271 382h3v1h-3zM277 382h3v1h-3zM283 382h3v1h-3zM289 382h3v1h-3zM295 382h3v1h-3zM301 382h3v1h-3zM307 382h3v1h-3zM313 382h3v1h-3zM319 382h3v1h-3zM325 382h3v1h-3zM331 382h3v1h-3zM337 382h3v1h-3zM343 382h3v1h-3zM349 382h3v1h-3zM355 382h3v1h-3zM361 382h3v1h-3zM367 382h3v1h-3zM373 382h3v1h-3zM379 382h3v1h-3zM385 382h3v1h-3zM391 382h3v1h-3zM397 382h3v1h-3zM403 382h3v1h-3zM409 382h3v1h-3zM415 382h3v1h-3zM421 382h3v1h-3zM427 382h3v1h-3zM433 382h3v1h-3zM439 382h3v1h-3zM445 382h3v1h-3zM451 382h3v1h-3zM457 382h3v1h-3zM463 382h3v1h-3zM469 382h3v1h-3zM475 382h3v1h-3zM481 382h3v1h-3zM487 382h3v1h-3zM493 382h3v1h-3zM499 382h3v1h-3zM505 382h3v1h-3zM511 382h3v1h-3zM517 382h3v1h-3zM523 382h3v1h-3zM529 382h3v1h-3zM535 382h3v1h-3zM541 382h3v1h-3zM547 382h3v1h-3zM553 382h3v1h-3zM559 382h3v1h-3zM565 382h3v1h-3zM571 382h3v1h-3zM577 382h3v1h-3zM583 382h3v1h-3zM589 382h3v1h-3zM595 382h3v1h-3zM601 382h3v1h-3zM607 382h3v1h-3zM613 382h3v1h-3zM619 382h3v1h-3zM625 382h3v1h-3zM631 382h3v1h-3zM637 382h3v1h-3zM643 382h3v1h-3zM649 382h3v1h-3zM655 382h3v1h-3zM661 382h3v1h-3zM667 382h3v1h-3zM673 382h3v1h-3zM679 382h3v1h-3zM685 382h3v1h-3zM691 382h3v1h-3zM697 382h3v1h-3zM703 382h3v1h-3zM709 382h3v1h-3zM715 382h3v1h-3zM721 382h3v1h-3zM727 382h3v1h-3zM733 382h3v1h-3zM739 382h3v1h-3zM745 382h3v1h-3zM751 382h3v1h-3zM757 382h3v1h-3zM763 382h1v1h-1zM13 435h3v1h-3zM19 435h3v1h-3zM25 435h3v1h-3zM31 435h3v1h-3zM37 435h3v1h-3zM43 435h3v1h-3zM49 435h3v1h-3zM55 435h3v1h-3zM61 435h3v1h-3zM67 435h3v1h-3zM73 435h3v1h-3zM79 435h3v1h-3zM85 435h3v1h-3zM91 435h3v1h-3zM97 435h3v1h-3zM103 435h3v1h-3zM109 435h3v1h-3zM115 435h3v1h-3zM121 435h3v1h-3zM127 435h3v1h-3zM133 435h3v1h-3zM139 435h3v1h-3zM145 435h3v1h-3zM151 435h3v1h-3zM157 435h3v1h-3zM163 435h3v1h-3zM169 435h3v1h-3zM175 435h3v1h-3zM181 435h3v1h-3zM187 435h3v1h-3zM193 435h3v1h-3zM199 435h3v1h-3zM205 435h3v1h-3zM211 435h3v1h-3zM217 435h3v1h-3zM223 435h3v1h-3zM229 435h3v1h-3zM235 435h3v1h-3zM241 435h3v1h-3zM247 435h3v1h-3zM253 435h3v1h-3zM259 435h3v1h-3zM265 435h3v1h-3zM271 435h3v1h-3zM277 435h3v1h-3zM283 435h3v1h-3zM289 435h3v1h-3zM295 435h3v1h-3zM301 435h3v1h-3zM307 435h3v1h-3zM313 435h3v1h-3zM319 435h3v1h-3zM325 435h3v1h-3zM331 435h3v1h-3zM337 435h3v1h-3zM343 435h3v1h-3zM349 435h3v1h-3zM355 435h3v1h-3zM361 435h3v1h-3zM367 435h3v1h-3zM373 435h3v1h-3zM379 435h3v1h-3zM385 435h3v1h-3zM391 435h3v1h-3zM397 435h3v1h-3zM403 435h3v1h-3zM409 435h3v1h-3zM415 435h3v1h-3zM421 435h3v1h-3zM427 435h3v1h-3zM433 435h3v1h-3zM439 435h3v1h-3zM445 435h3v1h-3zM451 435h3v1h-3zM457 435h3v1h-3zM463 435h3v1h-3zM469 435h3v1h-3zM475 435h3v1h-3zM481 435h3v1h-3zM487 435h3v1h-3zM493 435h3v1h-3zM499 435h3v1h-3zM505 435h3v1h-3zM511 435h3v1h-3zM517 435h3v1h-3zM523 435h3v1h-3zM529 435h3v1h-3zM535 435h3v1h-3zM541 435h3v1h-3zM547 435h3v1h-3zM553 435h3v1h-3zM559 435h3v1h-3zM565 435h3v1h-3zM571 435h3v1h-3zM577 435h3v1h-3zM583 435h3v1h-3zM589 435h3v1h-3zM595 435h3v1h-3zM601 435h3v1h-3zM607 435h3v1h-3zM613 435h3v1h-3zM619 435h3v1h-3zM625 435h3v1h-3zM631 435h3v1h-3zM637 435h3v1h-3zM643 435h3v1h-3zM649 435h3v1h-3zM655 435h3v1h-3zM661 435h3v1h-3zM667 435h3v1h-3zM673 435h3v1h-3zM679 435h3v1h-3zM685 435h3v1h-3zM691 435h3v1h-3zM697 435h3v1h-3zM703 435h3v1h-3zM709 435h3v1h-3zM715 435h3v1h-3zM721 435h3v1h-3zM727 435h3v1h-3zM733 435h3v1h-3zM739 435h3v1h-3zM745 435h3v1h-3zM751 435h3v1h-3zM757 435h3v1h-3zM763 435h1v1h-1zM13 446h3v1h-3zM19 446h3v1h-3zM25 446h3v1h-3zM31 446h3v1h-3zM37 446h3v1h-3zM43 446h3v1h-3zM49 446h3v1h-3zM55 446h3v1h-3zM61 446h3v1h-3zM67 446h3v1h-3zM73 446h3v1h-3zM79 446h3v1h-3zM85 446h3v1h-3zM91 446h3v1h-3zM97 446h3v1h-3zM103 446h3v1h-3zM109 446h3v1h-3zM115 446h3v1h-3zM121 446h3v1h-3zM127 446h3v1h-3zM133 446h3v1h-3zM139 446h3v1h-3zM145 446h3v1h-3zM151 446h3v1h-3zM157 446h3v1h-3zM163 446h3v1h-3zM169 446h3v1h-3zM175 446h3v1h-3zM181 446h3v1h-3zM187 446h3v1h-3zM193 446h3v1h-3zM199 446h3v1h-3zM205 446h3v1h-3zM211 446h3v1h-3zM217 446h3v1h-3zM223 446h3v1h-3zM229 446h3v1h-3zM235 446h3v1h-3zM241 446h3v1h-3zM247 446h3v1h-3zM253 446h3v1h-3zM259 446h3v1h-3zM265 446h3v1h-3zM271 446h3v1h-3zM277 446h3v1h-3zM283 446h3v1h-3zM289 446h3v1h-3zM295 446h3v1h-3zM301 446h3v1h-3zM307 446h3v1h-3zM313 446h3v1h-3zM319 446h3v1h-3zM325 446h3v1h-3zM331 446h3v1h-3zM337 446h3v1h-3zM343 446h3v1h-3zM349 446h3v1h-3zM355 446h3v1h-3zM361 446h3v1h-3zM367 446h3v1h-3zM373 446h3v1h-3zM379 446h3v1h-3zM385 446h3v1h-3zM391 446h3v1h-3zM397 446h3v1h-3zM403 446h3v1h-3zM409 446h3v1h-3zM415 446h3v1h-3zM421 446h3v1h-3zM427 446h3v1h-3zM433 446h3v1h-3zM439 446h3v1h-3zM445 446h3v1h-3zM451 446h3v1h-3zM457 446h3v1h-3zM463 446h3v1h-3zM469 446h3v1h-3zM475 446h3v1h-3zM481 446h3v1h-3zM487 446h3v1h-3zM493 446h3v1h-3zM499 446h3v1h-3zM505 446h3v1h-3zM511 446h3v1h-3zM517 446h3v1h-3zM523 446h3v1h-3zM529 446h3v1h-3zM535 446h3v1h-3zM541 446h3v1h-3zM547 446h3v1h-3zM553 446h3v1h-3zM559 446h3v1h-3zM565 446h3v1h-3zM571 446h3v1h-3zM577 446h3v1h-3zM583 446h3v1h-3zM589 446h3v1h-3zM595 446h3v1h-3zM601 446h3v1h-3zM607 446h3v1h-3zM613 446h3v1h-3zM619 446h3v1h-3zM625 446h3v1h-3zM631 446h3v1h-3zM637 446h3v1h-3zM643 446h3v1h-3zM649 446h3v1h-3zM655 446h3v1h-3zM661 446h3v1h-3zM667 446h3v1h-3zM673 446h3v1h-3zM679 446h3v1h-3zM685 446h3v1h-3zM691 446h3v1h-3zM697 446h3v1h-3zM703 446h3v1h-3zM709 446h3v1h-3zM715 446h3v1h-3zM721 446h3v1h-3zM727 446h3v1h-3zM733 446h3v1h-3zM739 446h3v1h-3zM745 446h3v1h-3zM751 446h3v1h-3zM757 446h3v1h-3zM763 446h1v1h-1zM13 464h3v1h-3zM19 464h3v1h-3zM25 464h3v1h-3zM31 464h3v1h-3zM37 464h3v1h-3zM43 464h3v1h-3zM49 464h3v1h-3zM55 464h3v1h-3zM61 464h3v1h-3zM67 464h3v1h-3zM73 464h3v1h-3zM79 464h3v1h-3zM85 464h3v1h-3zM91 464h3v1h-3zM97 464h3v1h-3zM103 464h3v1h-3zM109 464h3v1h-3zM115 464h3v1h-3zM121 464h3v1h-3zM127 464h3v1h-3zM133 464h3v1h-3zM139 464h3v1h-3zM145 464h3v1h-3zM151 464h3v1h-3zM157 464h3v1h-3zM163 464h3v1h-3zM169 464h3v1h-3zM175 464h3v1h-3zM181 464h3v1h-3zM187 464h3v1h-3zM193 464h3v1h-3zM199 464h3v1h-3zM205 464h3v1h-3zM211 464h3v1h-3zM217 464h3v1h-3zM223 464h3v1h-3zM229 464h3v1h-3zM235 464h3v1h-3zM241 464h3v1h-3zM247 464h3v1h-3zM253 464h3v1h-3zM259 464h3v1h-3zM265 464h3v1h-3zM271 464h3v1h-3zM277 464h3v1h-3zM283 464h3v1h-3zM289 464h3v1h-3zM295 464h3v1h-3zM301 464h3v1h-3zM307 464h3v1h-3zM313 464h3v1h-3zM319 464h3v1h-3zM325 464h3v1h-3zM331 464h3v1h-3zM337 464h3v1h-3zM343 464h3v1h-3zM349 464h3v1h-3zM355 464h3v1h-3zM361 464h3v1h-3zM367 464h3v1h-3zM373 464h3v1h-3zM379 464h3v1h-3zM385 464h3v1h-3zM391 464h3v1h-3zM397 464h3v1h-3zM403 464h3v1h-3zM409 464h3v1h-3zM415 464h3v1h-3zM421 464h3v1h-3zM427 464h3v1h-3zM433 464h3v1h-3zM439 464h3v1h-3zM445 464h3v1h-3zM451 464h3v1h-3zM457 464h3v1h-3zM463 464h3v1h-3zM469 464h3v1h-3zM475 464h3v1h-3zM481 464h3v1h-3zM487 464h3v1h-3zM493 464h3v1h-3zM499 464h3v1h-3zM505 464h3v1h-3zM511 464h3v1h-3zM517 464h3v1h-3zM523 464h3v1h-3zM529 464h3v1h-3zM535 464h3v1h-3zM541 464h3v1h-3zM547 464h3v1h-3zM553 464h3v1h-3zM559 464h3v1h-3zM565 464h3v1h-3zM571 464h3v1h-3zM577 464h3v1h-3zM583 464h3v1h-3zM589 464h3v1h-3zM595 464h3v1h-3zM601 464h3v1h-3zM607 464h3v1h-3zM613 464h3v1h-3zM619 464h3v1h-3zM625 464h3v1h-3zM631 464h3v1h-3zM637 464h3v1h-3zM643 464h3v1h-3zM649 464h3v1h-3zM655 464h3v1h-3zM661 464h3v1h-3zM667 464h3v1h-3zM673 464h3v1h-3zM679 464h3v1h-3zM685 464h3v1h-3zM691 464h3v1h-3zM697 464h3v1h-3zM703 464h3v1h-3zM709 464h3v1h-3zM715 464h3v1h-3zM721 464h3v1h-3zM727 464h3v1h-3zM733 464h3v1h-3zM739 464h3v1h-3zM745 464h3v1h-3zM751 464h3v1h-3zM757 464h3v1h-3zM763 464h1v1h-1zM13 521h3v1h-3zM19 521h3v1h-3zM25 521h3v1h-3zM31 521h3v1h-3zM37 521h3v1h-3zM43 521h3v1h-3zM49 521h3v1h-3zM55 521h3v1h-3zM61 521h3v1h-3zM67 521h3v1h-3zM73 521h3v1h-3zM79 521h3v1h-3zM85 521h3v1h-3zM91 521h3v1h-3zM97 521h3v1h-3zM103 521h3v1h-3zM109 521h3v1h-3zM115 521h3v1h-3zM121 521h3v1h-3zM127 521h3v1h-3zM133 521h3v1h-3zM139 521h3v1h-3zM145 521h3v1h-3zM151 521h3v1h-3zM157 521h3v1h-3zM163 521h3v1h-3zM169 521h3v1h-3zM175 521h3v1h-3zM181 521h3v1h-3zM187 521h3v1h-3zM193 521h3v1h-3zM199 521h3v1h-3zM205 521h3v1h-3zM211 521h3v1h-3zM217 521h3v1h-3zM223 521h3v1h-3zM229 521h3v1h-3zM235 521h3v1h-3zM241 521h3v1h-3zM247 521h3v1h-3zM253 521h3v1h-3zM259 521h3v1h-3zM265 521h3v1h-3zM271 521h3v1h-3zM277 521h3v1h-3zM283 521h3v1h-3zM289 521h3v1h-3zM295 521h3v1h-3zM301 521h3v1h-3zM307 521h3v1h-3zM313 521h3v1h-3zM319 521h3v1h-3zM325 521h3v1h-3zM331 521h3v1h-3zM337 521h3v1h-3zM343 521h3v1h-3zM349 521h3v1h-3zM355 521h3v1h-3zM361 521h3v1h-3zM367 521h3v1h-3zM373 521h3v1h-3zM379 521h3v1h-3zM385 521h3v1h-3zM391 521h3v1h-3zM397 521h3v1h-3zM403 521h3v1h-3zM409 521h3v1h-3zM415 521h3v1h-3zM421 521h3v1h-3zM427 521h3v1h-3zM433 521h3v1h-3zM439 521h3v1h-3zM445 521h3v1h-3zM451 521h3v1h-3zM457 521h3v1h-3zM463 521h3v1h-3zM469 521h3v1h-3zM475 521h3v1h-3zM481 521h3v1h-3zM487 521h3v1h-3zM493 521h3v1h-3zM499 521h3v1h-3zM505 521h3v1h-3zM511 521h3v1h-3zM517 521h3v1h-3zM523 521h3v1h-3zM529 521h3v1h-3zM535 521h3v1h-3zM541 521h3v1h-3zM547 521h3v1h-3zM553 521h3v1h-3zM559 521h3v1h-3zM565 521h3v1h-3zM571 521h3v1h-3zM577 521h3v1h-3zM583 521h3v1h-3zM589 521h3v1h-3zM595 521h3v1h-3zM601 521h3v1h-3zM607 521h3v1h-3zM613 521h3v1h-3zM619 521h3v1h-3zM625 521h3v1h-3zM631 521h3v1h-3zM637 521h3v1h-3zM643 521h3v1h-3zM649 521h3v1h-3zM655 521h3v1h-3zM661 521h3v1h-3zM667 521h3v1h-3zM673 521h3v1h-3zM679 521h3v1h-3zM685 521h3v1h-3zM691 521h3v1h-3zM697 521h3v1h-3zM703 521h3v1h-3zM709 521h3v1h-3zM715 521h3v1h-3zM721 521h3v1h-3zM727 521h3v1h-3zM733 521h3v1h-3zM739 521h3v1h-3zM745 521h3v1h-3zM751 521h3v1h-3zM757 521h3v1h-3zM763 521h1v1h-1zM13 538h3v1h-3zM19 538h3v1h-3zM25 538h3v1h-3zM31 538h3v1h-3zM37 538h3v1h-3zM43 538h3v1h-3zM49 538h3v1h-3zM55 538h3v1h-3zM61 538h3v1h-3zM67 538h3v1h-3zM73 538h3v1h-3zM79 538h3v1h-3zM85 538h3v1h-3zM91 538h3v1h-3zM97 538h3v1h-3zM103 538h3v1h-3zM109 538h3v1h-3zM115 538h3v1h-3zM121 538h3v1h-3zM127 538h3v1h-3zM133 538h3v1h-3zM139 538h3v1h-3zM145 538h3v1h-3zM151 538h3v1h-3zM157 538h3v1h-3zM163 538h3v1h-3zM169 538h3v1h-3zM175 538h3v1h-3zM181 538h3v1h-3zM187 538h3v1h-3zM193 538h3v1h-3zM199 538h3v1h-3zM205 538h3v1h-3zM211 538h3v1h-3zM217 538h3v1h-3zM223 538h3v1h-3zM229 538h3v1h-3zM235 538h3v1h-3zM241 538h3v1h-3zM247 538h3v1h-3zM253 538h3v1h-3zM259 538h3v1h-3zM265 538h3v1h-3zM271 538h3v1h-3zM277 538h3v1h-3zM283 538h3v1h-3zM289 538h3v1h-3zM295 538h3v1h-3zM301 538h3v1h-3zM307 538h3v1h-3zM313 538h3v1h-3zM319 538h3v1h-3zM325 538h3v1h-3zM331 538h3v1h-3zM337 538h3v1h-3zM343 538h3v1h-3zM349 538h3v1h-3zM355 538h3v1h-3zM361 538h3v1h-3zM367 538h3v1h-3zM373 538h3v1h-3zM379 538h3v1h-3zM385 538h3v1h-3zM391 538h3v1h-3zM397 538h3v1h-3zM403 538h3v1h-3zM409 538h3v1h-3zM415 538h3v1h-3zM421 538h3v1h-3zM427 538h3v1h-3zM433 538h3v1h-3zM439 538h3v1h-3zM445 538h3v1h-3zM451 538h3v1h-3zM457 538h3v1h-3zM463 538h3v1h-3zM469 538h3v1h-3zM475 538h3v1h-3zM481 538h3v1h-3zM487 538h3v1h-3zM493 538h3v1h-3zM499 538h3v1h-3zM505 538h3v1h-3zM511 538h3v1h-3zM517 538h3v1h-3zM523 538h3v1h-3zM529 538h3v1h-3zM535 538h3v1h-3zM541 538h3v1h-3zM547 538h3v1h-3zM553 538h3v1h-3zM559 538h3v1h-3zM565 538h3v1h-3zM571 538h3v1h-3zM577 538h3v1h-3zM583 538h3v1h-3zM589 538h3v1h-3zM595 538h3v1h-3zM601 538h3v1h-3zM607 538h3v1h-3zM613 538h3v1h-3zM619 538h3v1h-3zM625 538h3v1h-3zM631 538h3v1h-3zM637 538h3v1h-3zM643 538h3v1h-3zM649 538h3v1h-3zM655 538h3v1h-3zM661 538h3v1h-3zM667 538h3v1h-3zM673 538h3v1h-3zM679 538h3v1h-3zM685 538h3v1h-3zM691 538h3v1h-3zM697 538h3v1h-3zM703 538h3v1h-3zM709 538h3v1h-3zM715 538h3v1h-3zM721 538h3v1h-3zM727 538h3v1h-3zM733 538h3v1h-3zM739 538h3v1h-3zM745 538h3v1h-3zM751 538h3v1h-3zM757 538h3v1h-3zM763 538h1v1h-1z" fill="#c0c0c0" shape-rendering="crispEdges"/>
<clipPath id="cm"><rect x="12" y="33" width="753" height="257"/></clipPath>
<g clip-path="url(#cm)" shape-rendering="crispEdges"><path d="M12 185h1v31h-1zM10 186h5v15h-5zM20 190h1v13h-1zM18 194h5v7h-5zM28 188h1v10h-1zM26 193h5v2h-5zM36 183h1v17h-1zM34 184h5v10h-5zM44 148h1v37h-1zM42 155h5v30h-5zM52 132h1v28h-1zM50 133h5v23h-5zM60 126h1v18h-1zM58 128h5v6h-5zM68 128h1v11h-1zM66 128h5v8h-5zM76 106h1v27h-1zM74 114h5v18h-5zM84 113h1v17h-1zM82 114h5v11h-5zM92 123h1v17h-1zM90 124h5v4h-5zM100 112h1v17h-1zM98 112h5v17h-5zM108 99h1v24h-1zM106 100h5v13h-5zM116 93h1v12h-1zM114 100h5v4h-5zM124 90h1v16h-1zM122 92h5v12h-5zM132 91h1v16h-1zM130 92h5v9h-5zM140 97h1v19h-1zM138 100h5v13h-5zM148 106h1v13h-1zM146 112h5v1h-5zM156 100h1v25h-1zM154 110h5v3h-5zM164 100h1v12h-1zM162 105h5v6h-5zM172 84h1v27h-1zM170 87h5v19h-5zM180 85h1v25h-1zM178 87h5v19h-5zM188 96h1v13h-1zM186 100h5v6h-5zM196 91h1v24h-1zM194 101h5v9h-5zM204 84h1v28h-1zM202 87h5v23h-5zM212 67h1v23h-1zM210 70h5v17h-5zM220 63h1v13h-1zM218 70h5v6h-5zM228 63h1v17h-1zM226 67h5v9h-5zM236 46h1v23h-1zM234 49h5v19h-5zM244 46h1v21h-1zM242 49h5v18h-5zM252 58h1v45h-1zM250 66h5v37h-5zM260 100h1v38h-1zM258 102h5v28h-5zM268 122h1v38h-1zM266 130h5v11h-5zM276 130h1v32h-1zM274 140h5v14h-5zM284 145h1v26h-1zM282 153h5v16h-5zM292 166h1v51h-1zM290 168h5v15h-5zM300 174h1v55h-1zM298 182h5v41h-5zM308 213h1v27h-1zM306 221h5v15h-5zM316 190h1v41h-1zM314 204h5v25h-5zM324 195h1v16h-1zM322 201h5v4h-5zM332 189h1v29h-1zM330 201h5v15h-5zM340 204h1v18h-1zM338 206h5v10h-5zM348 181h1v27h-1zM346 193h5v14h-5zM356 184h1v16h-1zM354 191h5v3h-5zM364 186h1v20h-1zM362 191h5v12h-5zM372 193h1v20h-1zM370 199h5v4h-5zM380 192h1v22h-1zM378 199h5v4h-5zM388 169h1v36h-1zM386 178h5v25h-5zM396 155h1v25h-1zM394 160h5v19h-5zM404 150h1v15h-1zM402 160h5v3h-5zM412 150h1v16h-1zM410 154h5v9h-5zM420 153h1v13h-1zM418 154h5v9h-5zM428 150h1v18h-1zM426 154h5v9h-5zM436 154h1v32h-1zM434 154h5v26h-5zM444 166h1v26h-1zM442 173h5v7h-5zM452 166h1v24h-1zM450 173h5v17h-5zM460 178h1v25h-1zM458 180h5v10h-5zM468 169h1v20h-1zM466 174h5v7h-5zM476 164h1v24h-1zM474 174h5v13h-5zM484 176h1v18h-1zM482 178h5v9h-5zM492 165h1v49h-1zM490 178h5v31h-5zM500 203h1v27h-1zM498 208h5v12h-5zM508 215h1v28h-1zM506 219h5v17h-5zM516 220h1v20h-1zM514 220h5v16h-5zM524 218h1v42h-1zM522 220h5v31h-5zM532 248h1v36h-1zM530 250h5v5h-5zM540 229h1v37h-1zM538 252h5v4h-5zM548 235h1v20h-1zM546 244h5v9h-5zM556 221h1v22h-1zM554 229h5v14h-5zM564 227h1v17h-1zM562 229h5v2h-5zM572 226h1v49h-1zM570 230h5v38h-5zM580 252h1v19h-1zM578 253h5v15h-5zM588 244h1v21h-1zM586 253h5v1h-5zM596 247h1v26h-1zM594 253h5v15h-5zM604 257h1v27h-1zM602 267h5v14h-5zM612 255h1v27h-1zM610 258h5v23h-5zM620 231h1v39h-1zM618 232h5v27h-5zM628 223h1v18h-1zM626 232h5v4h-5zM636 226h1v14h-1zM634 233h5v4h-5zM644 219h1v16h-1zM642 229h5v5h-5zM652 223h1v18h-1zM650 227h5v14h-5zM660 240h1v14h-1zM658 240h5v9h-5zM668 228h1v27h-1zM666 228h5v21h-5zM676 217h1v29h-1zM674 218h5v11h-5zM684 207h1v27h-1zM682 218h5v5h-5zM692 210h1v21h-1zM690 213h5v10h-5zM700 209h1v12h-1zM698 213h5v1h-5zM708 202h1v12h-1zM706 205h5v9h-5zM716 183h1v26h-1zM714 187h5v18h-5zM724 183h1v12h-1zM722 187h5v5h-5zM732 187h1v26h-1zM730 189h5v3h-5zM740 177h1v14h-1zM738 180h5v10h-5zM748 173h1v15h-1zM746 177h5v5h-5zM756 176h1v16h-1zM754 177h5v11h-5zM764 186h1v25h-1zM762 186h5v21h-5z" fill="#00ff00"/><path d="M11 187h3v13h-3zM67 129h3v6h-3zM83 115h3v9h-3zM91 125h3v2h-3zM115 101h3v2h-3zM131 93h3v7h-3zM139 101h3v11h-3zM179 88h3v17h-3zM195 102h3v7h-3zM219 71h3v4h-3zM243 50h3v16h-3zM251 67h3v35h-3zM259 103h3v26h-3zM267 131h3v9h-3zM275 141h3v12h-3zM283 154h3v14h-3zM291 169h3v13h-3zM299 183h3v39h-3zM307 222h3v13h-3zM331 202h3v13h-3zM363 192h3v10h-3zM379 200h3v2h-3zM403 161h3v1h-3zM419 155h3v7h-3zM435 155h3v24h-3zM451 174h3v15h-3zM475 175h3v11h-3zM491 179h3v29h-3zM499 209h3v10h-3zM507 220h3v15h-3zM523 221h3v29h-3zM531 251h3v3h-3zM571 231h3v36h-3zM595 254h3v13h-3zM603 268h3v12h-3zM627 233h3v2h-3zM651 228h3v12h-3zM659 241h3v7h-3zM683 219h3v3h-3zM723 188h3v3h-3zM755 178h3v9h-3zM763 187h3v19h-3z" fill="#ffffff"/><path d="M19 195h3v5h-3zM35 185h3v8h-3zM43 156h3v28h-3zM51 134h3v21h-3zM59 129h3v4h-3zM75 115h3v16h-3zM99 113h3v15h-3zM107 101h3v11h-3zM123 93h3v10h-3zM155 111h3v1h-3zM163 106h3v4h-3zM171 88h3v17h-3zM187 101h3v4h-3zM203 88h3v21h-3zM211 71h3v15h-3zM227 68h3v7h-3zM235 50h3v17h-3zM315 205h3v23h-3zM323 202h3v2h-3zM339 207h3v8h-3zM347 194h3v12h-3zM355 192h3v1h-3zM371 200h3v2h-3zM387 179h3v23h-3zM395 161h3v17h-3zM411 155h3v7h-3zM427 155h3v7h-3zM443 174h3v5h-3zM459 181h3v8h-3zM467 175h3v5h-3zM483 179h3v7h-3zM515 221h3v14h-3zM539 253h3v2h-3zM547 245h3v7h-3zM555 230h3v12h-3zM579 254h3v13h-3zM611 259h3v21h-3zM619 233h3v25h-3zM635 234h3v2h-3zM643 230h3v3h-3zM667 229h3v19h-3zM675 219h3v9h-3zM691 214h3v8h-3zM707 206h3v7h-3zM715 188h3v16h-3zM731 190h3v1h-3zM739 181h3v8h-3zM747 178h3v3h-3z" fill="#000000"/></g>
<polygon points="44.10,184.30 45.42,187.62 48.95,187.10 46.73,189.90 48.95,192.70 45.42,192.18 44.10,195.50 42.78,192.18 39.25,192.70 41.47,189.90 39.25,187.10 42.78,187.62" fill="#ee82ee"/>
<polygon points="51.80,166.50 61.80,176.50 61.80,180.30 53.60,172.10 53.60,188.10 50.00,188.10 50.00,172.10 41.80,180.30 41.80,176.50" fill="#ee82ee"/>
<polygon points="259.80,88.00 261.16,91.44 264.82,90.90 262.53,93.80 264.82,96.70 261.16,96.16 259.80,99.60 258.44,96.16 254.78,96.70 257.07,93.80 254.78,90.90 258.44,91.44" fill="#d3d3d3"/>
<polygon points="268.40,121.20 278.40,111.20 278.40,107.40 270.20,115.60 270.20,99.60 266.60,99.60 266.60,115.60 258.40,107.40 258.40,111.20" fill="#d3d3d3"/>
<polygon points="500.20,190.80 501.56,194.24 505.22,193.70 502.93,196.60 505.22,199.50 501.56,198.96 500.20,202.40 498.84,198.96 495.18,199.50 497.47,196.60 495.18,193.70 498.84,194.24" fill="#d3d3d3"/>
<polygon points="508.50,215.00 518.50,205.00 518.50,201.20 510.30,209.40 510.30,193.40 506.70,193.40 506.70,209.40 498.50,201.20 498.50,205.00" fill="#d3d3d3"/>
<polygon points="636.20,239.20 637.52,242.52 641.05,242.00 638.83,244.80 641.05,247.60 637.52,247.08 636.20,250.40 634.88,247.08 631.35,247.60 633.57,244.80 631.35,242.00 634.88,242.52" fill="#ee82ee"/>
<polygon points="644.00,241.20 654.00,251.20 654.00,255.00 645.80,246.80 645.80,262.80 642.20,262.80 642.20,246.80 634.00,255.00 634.00,251.20" fill="#ee82ee"/>
<polygon points="676.20,243.00 677.52,246.32 681.05,245.80 678.83,248.60 681.05,251.40 677.52,250.88 676.20,254.20 674.88,250.88 671.35,251.40 673.57,248.60 671.35,245.80 674.88,246.32" fill="#ee82ee"/>
<polygon points="684.10,240.90 694.10,250.90 694.10,254.70 685.90,246.50 685.90,262.50 682.30,262.50 682.30,246.50 674.10,254.70 674.10,250.90" fill="#ee82ee"/>
<clipPath id="cd"><rect x="12" y="293" width="753" height="127"/></clipPath>
<clipPath id="cr"><rect x="12" y="423" width="753" height="127"/></clipPath>
<polyline points="12,371.7 20,370.9 28,365.2 36,363.6 44,336.4 52,329.9 60,329.5 68,323.6 76,318.1 84,317.6 92,326.8 100,325.0 108,324.1 116,323.8 124,307.0 132,308.0 140,315.6 148,315.9 156,327.3 164,332.8 172,329.1 180,328.7 188,338.7 196,340.8 204,328.2 212,326.7 220,330.4 228,334.7 236,329.0 244,329.0 252,346.3 260,361.8 268,370.0 276,370.0 284,380.8 292,389.0 300,390.4 308,393.5 316,387.7 324,393.5 332,393.5 340,393.5 348,392.5 356,391.8 364,388.4 372,383.6 380,378.2 388,367.3 396,357.0 404,336.4 412,330.2 420,320.6 428,328.2 436,342.6 444,344.0 452,341.5 460,361.8 468,356.3 476,349.0 484,348.8 492,355.0 500,374.3 508,387.3 516,392.1 524,393.5 532,397.6 540,388.0 548,385.2 556,376.6 564,377.0 572,380.1 580,383.9 588,383.5 596,382.9 604,387.0 612,382.9 620,366.0 628,363.7 636,356.4 644,341.7 652,353.0 660,359.3 668,360.3 676,355.7 684,334.1 692,334.1 700,337.1 708,328.9 716,314.9 724,314.9 732,336.0 740,336.0 748,334.7 756,339.9 764,346.1" fill="none" stroke="#20b2aa" stroke-width="2" stroke-linejoin="round" shape-rendering="crispEdges" clip-path="url(#cd)"/>
<polyline points="12,508.7 20,514.3 28,514.3 36,511.4 44,503.2 52,492.9 60,484.3 68,476.5 76,468.0 84,460.2 92,453.4 100,447.0 108,441.0 116,439.0 124,437.8 132,437.8 140,437.8 148,437.8 156,438.2 164,439.0 172,439.4 180,440.6 188,441.8 196,443.0 204,442.5 212,442.1 220,441.8 228,441.8 236,441.8 244,441.8 252,446.3 260,456.1 268,467.5 276,479.5 284,490.7 292,499.0 300,507.3 308,515.0 316,519.4 324,523.2 332,526.6 340,529.2 348,532.2 356,534.5 364,536.8 372,537.4 380,537.4 388,536.8 396,533.5 404,530.0 412,525.3 420,520.2 428,515.0 436,507.9 444,500.1 452,493.6 460,487.8 468,480.0 476,472.8 484,462.7 492,461.7 500,467.2 508,477.5 516,490.4 524,499.8 532,509.3 540,517.9 548,523.0 556,528.2 564,533.3 572,536.8 580,540.6 588,544.6 596,545.2 604,545.9 612,545.9 620,542.8 628,540.4 636,537.3 644,531.8 652,528.2 660,524.1 668,516.9 676,506.5 684,495.9 692,484.5 700,473.2 708,463.8 716,458.1 724,449.6 732,447.7 740,446.7 748,445.4 756,443.5 764,442.0" fill="none" stroke="#00ffff" stroke-width="2" stroke-linejoin="round" shape-rendering="crispEdges" clip-path="url(#cr)"/>
<polyline points="12,450.8 20,451.1 28,452.5 36,452.5 44,452.5 52,452.5 60,452.5 68,451.6 76,451.6 84,451.1 92,451.1 100,450.8 108,450.0 116,450.0 124,450.0 132,450.0 140,450.0 148,450.0 156,450.0 164,450.0 172,450.0 180,448.2 188,447.6 196,447.6 204,447.5 212,447.2 220,447.2 228,447.2 236,447.0 244,445.5 252,444.8 260,445.1 268,446.3 276,447.6 284,448.2 292,450.2 300,455.1 308,460.8 316,465.5 324,470.2 332,475.0 340,478.8 348,482.5 356,485.4 364,489.5 372,494.8 380,500.1 388,502.7 396,505.2 404,508.3 412,510.3 420,513.4 428,516.0 436,519.6 444,524.2 452,527.6 460,528.4 468,529.5 476,530.0 484,530.0 492,531.6 500,532.1 508,533.3 516,533.3 524,534.2 532,534.7 540,535.0 548,535.0 556,535.6 564,535.9 572,535.9 580,535.9 588,536.1 596,536.7 604,536.7 612,536.7 620,536.3 628,535.9 636,535.5 644,534.3 652,533.7 660,533.7 668,532.4 676,531.2 684,528.6 692,526.7 700,524.8 708,523.3 716,522.4 724,521.8 732,518.6 740,515.7 748,513.8 756,512.3 764,511.9" fill="none" stroke="#ffff00" stroke-width="2" stroke-linejoin="round" shape-rendering="crispEdges" clip-path="url(#cr)"/>
<path d="M11 32H766V33H11Z M11 290H766V291H11Z M11 32H12V290H11Z M765 32H766V290H765ZM11 292H766V293H11Z M11 420H766V421H11Z M11 292H12V420H11Z M765 292H766V420H765ZM11 422H766V423H11Z M11 550H766V551H11Z M11 422H12V550H11Z M765 422H766V550H765ZM766 56h2v1h-2zM766 89h2v1h-2zM766 122h2v1h-2zM766 155h2v1h-2zM766 188h2v1h-2zM766 221h2v1h-2zM766 254h2v1h-2zM766 287h2v1h-2zM766 294h1v1h-1zM766 419h1v1h-1zM766 424h1v1h-1zM766 492h1v1h-1zM766 549h1v1h-1zM12 551h1v3h-1zM76 551h1v3h-1zM140 551h1v3h-1zM204 551h1v3h-1zM268 551h1v3h-1zM332 551h1v3h-1zM396 551h1v3h-1zM460 551h1v3h-1zM524 551h1v3h-1zM588 551h1v3h-1zM652 551h1v3h-1zM716 551h1v3h-1z" fill="#ffffff" shape-rendering="crispEdges"/>
<polygon points="12,544 12,550 18,550" fill="#778899"/>
<polygon points="15,39 22,39 18.5,43" fill="#ffffff"/>
<text x="27.3" y="44.2" font-family="Liberation Sans" font-size="10.4" fill="#ffffff" textLength="55.6" lengthAdjust="spacingAndGlyphs">AUDUSD,H4</text>
<text x="89.5" y="44.2" font-family="Liberation Sans" font-size="10.4" fill="#ffffff" textLength="32.6" lengthAdjust="spacingAndGlyphs">0.73536</text>
<text x="125.1" y="44.2" font-family="Liberation Sans" font-size="10.4" fill="#ffffff" textLength="32.6" lengthAdjust="spacingAndGlyphs">0.73536</text>
<text x="161.2" y="44.2" font-family="Liberation Sans" font-size="10.4" fill="#ffffff" textLength="32.6" lengthAdjust="spacingAndGlyphs">0.73313</text>
<text x="196.8" y="44.2" font-family="Liberation Sans" font-size="10.4" fill="#ffffff" textLength="32.6" lengthAdjust="spacingAndGlyphs">0.73324</text>
<text x="16" y="304.8" font-family="Liberation Sans" font-size="10.4" fill="#ffffff" textLength="66" lengthAdjust="spacingAndGlyphs">DeM(14) 0.4000</text>
<text x="16.5" y="435.2" font-family="Liberation Sans" font-size="10.4" fill="#ffffff" textLength="102" lengthAdjust="spacingAndGlyphs">R1(26) -44.3  R1(52) -6.3</text>
<text x="771" y="60.1" font-family="Liberation Sans" font-size="10.4" fill="#ffffff" textLength="33" lengthAdjust="spacingAndGlyphs">0.79895</text>
<text x="771" y="93.1" font-family="Liberation Sans" font-size="10.4" fill="#ffffff" textLength="33" lengthAdjust="spacingAndGlyphs">0.79355</text>
<text x="771" y="126.1" font-family="Liberation Sans" font-size="10.4" fill="#ffffff" textLength="33" lengthAdjust="spacingAndGlyphs">0.78815</text>
<text x="771" y="159.1" font-family="Liberation Sans" font-size="10.4" fill="#ffffff" textLength="33" lengthAdjust="spacingAndGlyphs">0.78290</text>
<text x="771" y="192.1" font-family="Liberation Sans" font-size="10.4" fill="#ffffff" textLength="33" lengthAdjust="spacingAndGlyphs">0.77750</text>
<text x="771" y="225.1" font-family="Liberation Sans" font-size="10.4" fill="#ffffff" textLength="33" lengthAdjust="spacingAndGlyphs">0.77210</text>
<text x="771" y="258.1" font-family="Liberation Sans" font-size="10.4" fill="#ffffff" textLength="33" lengthAdjust="spacingAndGlyphs">0.76670</text>
<text x="771" y="291.1" font-family="Liberation Sans" font-size="10.4" fill="#ffffff" textLength="33" lengthAdjust="spacingAndGlyphs">0.76145</text>
<text x="769.5" y="302.8" font-family="Liberation Sans" font-size="10.4" fill="#ffffff" textLength="3.5" lengthAdjust="spacingAndGlyphs">1</text>
<text x="769" y="335.0" font-family="Liberation Sans" font-size="10.4" fill="#ffffff" textLength="12.5" lengthAdjust="spacingAndGlyphs">0.7</text>
<text x="769" y="360.0" font-family="Liberation Sans" font-size="10.4" fill="#ffffff" textLength="12.5" lengthAdjust="spacingAndGlyphs">0.5</text>
<text x="769" y="386.0" font-family="Liberation Sans" font-size="10.4" fill="#ffffff" textLength="12.5" lengthAdjust="spacingAndGlyphs">0.3</text>
<text x="769" y="417.0" font-family="Liberation Sans" font-size="10.4" fill="#ffffff" textLength="5" lengthAdjust="spacingAndGlyphs">0</text>
<text x="769" y="432.7" font-family="Liberation Sans" font-size="10.4" fill="#ffffff" textLength="14" lengthAdjust="spacingAndGlyphs">120</text>
<text x="768.3" y="439.0" font-family="Liberation Sans" font-size="10.4" fill="#ffffff" textLength="14.5" lengthAdjust="spacingAndGlyphs">100</text>
<text x="768.2" y="449.9" font-family="Liberation Sans" font-size="10.4" fill="#ffffff" textLength="9.5" lengthAdjust="spacingAndGlyphs">80</text>
<text x="768.2" y="467.9" font-family="Liberation Sans" font-size="10.4" fill="#ffffff" textLength="9.5" lengthAdjust="spacingAndGlyphs">50</text>
<text x="768.5" y="496.0" font-family="Liberation Sans" font-size="10.4" fill="#ffffff" textLength="17.5" lengthAdjust="spacingAndGlyphs">0.00</text>
<text x="768.2" y="525.0" font-family="Liberation Sans" font-size="10.4" fill="#ffffff" textLength="12.8" lengthAdjust="spacingAndGlyphs">-50</text>
<text x="768.2" y="542.1" font-family="Liberation Sans" font-size="10.4" fill="#ffffff" textLength="12.8" lengthAdjust="spacingAndGlyphs">-80</text>
<text x="768.4" y="546.9" font-family="Liberation Sans" font-size="10.4" fill="#ffffff" textLength="18" lengthAdjust="spacingAndGlyphs">-100</text>
<text x="12" y="562.8" font-family="Liberation Sans" font-size="10.4" fill="#ffffff" textLength="50.4" lengthAdjust="spacingAndGlyphs">18 Feb 2021</text>
<text x="75.2" y="562.8" font-family="Liberation Sans" font-size="10.4" fill="#ffffff" textLength="55" lengthAdjust="spacingAndGlyphs">22 Feb 00:00</text>
<text x="139.2" y="562.8" font-family="Liberation Sans" font-size="10.4" fill="#ffffff" textLength="55" lengthAdjust="spacingAndGlyphs">23 Feb 08:00</text>
<text x="203.2" y="562.8" font-family="Liberation Sans" font-size="10.4" fill="#ffffff" textLength="54.5" lengthAdjust="spacingAndGlyphs">24 Feb 16:00</text>
<text x="267.2" y="562.8" font-family="Liberation Sans" font-size="10.4" fill="#ffffff" textLength="55" lengthAdjust="spacingAndGlyphs">26 Feb 00:00</text>
<text x="331.2" y="562.8" font-family="Liberation Sans" font-size="10.4" fill="#ffffff" textLength="49.2" lengthAdjust="spacingAndGlyphs">1 Mar 08:00</text>
<text x="395.2" y="562.8" font-family="Liberation Sans" font-size="10.4" fill="#ffffff" textLength="48.8" lengthAdjust="spacingAndGlyphs">2 Mar 16:00</text>
<text x="459.2" y="562.8" font-family="Liberation Sans" font-size="10.4" fill="#ffffff" textLength="49.2" lengthAdjust="spacingAndGlyphs">4 Mar 00:00</text>
<text x="523.2" y="562.8" font-family="Liberation Sans" font-size="10.4" fill="#ffffff" textLength="49.2" lengthAdjust="spacingAndGlyphs">5 Mar 08:00</text>
<text x="587.2" y="562.8" font-family="Liberation Sans" font-size="10.4" fill="#ffffff" textLength="48.8" lengthAdjust="spacingAndGlyphs">8 Mar 16:00</text>
<text x="651.2" y="562.8" font-family="Liberation Sans" font-size="10.4" fill="#ffffff" textLength="54.5" lengthAdjust="spacingAndGlyphs">10 Mar 00:00</text>
<text x="715.2" y="562.8" font-family="Liberation Sans" font-size="10.4" fill="#ffffff" textLength="53.6" lengthAdjust="spacingAndGlyphs">11 Mar 08:00</text>
</svg>
</body></html>
